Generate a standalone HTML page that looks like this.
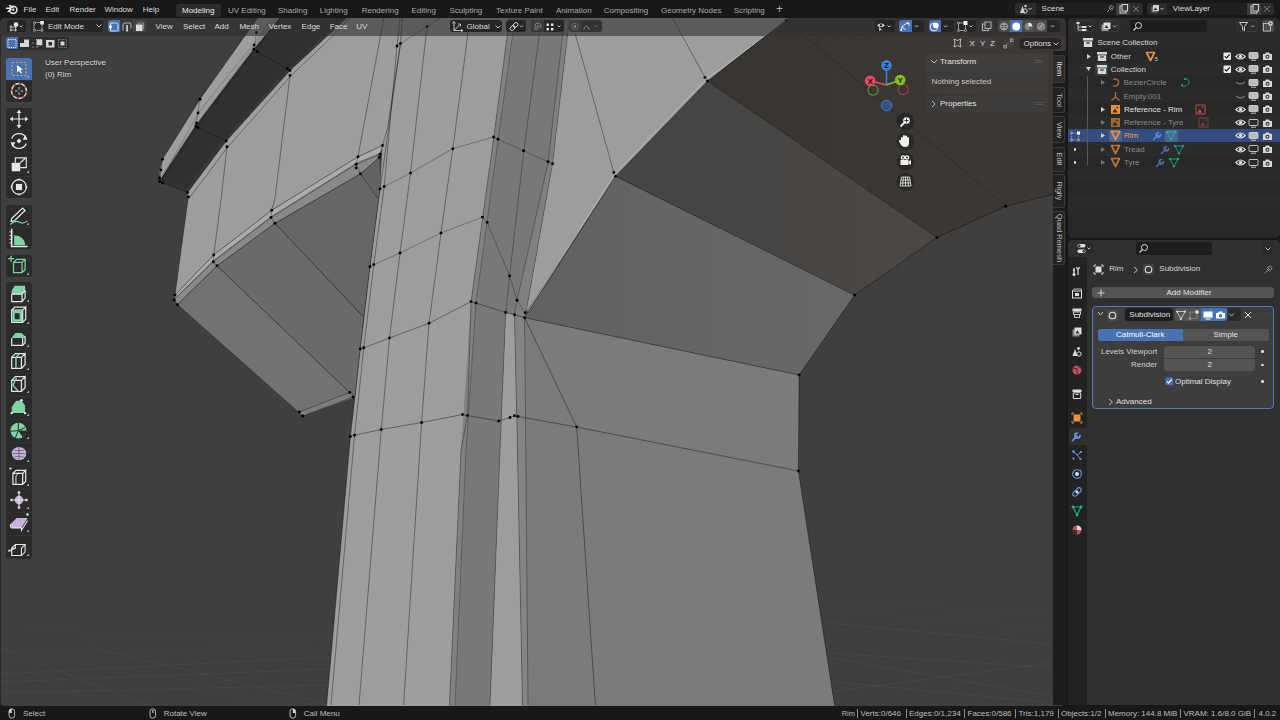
<!DOCTYPE html>
<html><head><meta charset="utf-8">
<style>
*{box-sizing:border-box;margin:0;padding:0}
html,body{width:1280px;height:720px;overflow:hidden;background:#181818;font-family:"Liberation Sans",sans-serif;color:#d6d6d6;font-size:9px;line-height:1}
.a{position:absolute}
.t{position:absolute;white-space:nowrap}
</style></head><body>
<div class="a" style="left:0;top:18px;width:1066px;height:688px;overflow:hidden;border-radius:5px;background:#3f3f3f">
<svg class="a" style="left:0;top:-18px" width="1066" height="706" viewBox="0 0 1066 706">
<defs><linearGradient id="gdark" gradientUnits="userSpaceOnUse" x1="720" y1="0" x2="1050" y2="0"><stop offset="0" stop-color="#373532"/><stop offset="1" stop-color="#3d3835"/></linearGradient><linearGradient id="gmid" gradientUnits="userSpaceOnUse" x1="620" y1="0" x2="930" y2="0"><stop offset="0" stop-color="#464543"/><stop offset="1" stop-color="#4a4745"/></linearGradient><linearGradient id="glow" gradientUnits="userSpaceOnUse" x1="530" y1="0" x2="850" y2="0"><stop offset="0" stop-color="#606161"/><stop offset="1" stop-color="#676868"/></linearGradient></defs>
<polyline points="0.0,647.6 148.7,706.0" fill="none" stroke="#6a6a6a" stroke-width="0.9" stroke-opacity="0.22"/>
<polyline points="93.0,647.6 324.0,703.0" fill="none" stroke="#6a6a6a" stroke-width="0.9" stroke-opacity="0.22"/>
<polyline points="0.0,674.0 329.0,657.0" fill="none" stroke="#6a6a6a" stroke-width="0.9" stroke-opacity="0.22"/>
<polyline points="0.0,682.0 329.0,669.0" fill="none" stroke="#6a6a6a" stroke-width="0.9" stroke-opacity="0.22"/>
<polyline points="0.0,693.0 329.0,685.0" fill="none" stroke="#6a6a6a" stroke-width="0.9" stroke-opacity="0.22"/>
<polyline points="0.0,662.0 329.0,650.0" fill="none" stroke="#6a6a6a" stroke-width="0.9" stroke-opacity="0.08"/>
<polyline points="0.0,655.0 329.0,644.0" fill="none" stroke="#6a6a6a" stroke-width="0.9" stroke-opacity="0.06"/>
<polyline points="20.0,630.0 329.0,640.0" fill="none" stroke="#6a6a6a" stroke-width="0.9" stroke-opacity="0.06"/>
<polyline points="180.0,690.0 329.0,705.0" fill="none" stroke="#6a6a6a" stroke-width="0.9" stroke-opacity="0.1"/>
<polyline points="823.6,622.6 1052.0,644.0" fill="none" stroke="#6a6a6a" stroke-width="0.9" stroke-opacity="0.22"/>
<polyline points="828.0,653.0 1052.0,667.5" fill="none" stroke="#6a6a6a" stroke-width="0.9" stroke-opacity="0.22"/>
<polyline points="835.0,691.0 1052.0,662.8" fill="none" stroke="#6a6a6a" stroke-width="0.9" stroke-opacity="0.22"/>
<polyline points="830.7,658.0 1052.0,696.0" fill="none" stroke="#6a6a6a" stroke-width="0.9" stroke-opacity="0.22"/>
<polyline points="835.0,681.7 1052.0,703.0" fill="none" stroke="#6a6a6a" stroke-width="0.9" stroke-opacity="0.22"/>
<polyline points="820.0,610.0 1052.0,628.0" fill="none" stroke="#6a6a6a" stroke-width="0.9" stroke-opacity="0.07"/>
<polyline points="818.0,600.0 1052.0,615.0" fill="none" stroke="#6a6a6a" stroke-width="0.9" stroke-opacity="0.05"/>
<polygon points="707.5,81.0 788.0,18.0 1066.0,18.0 1066.0,192.0 1052.6,194.4 1005.7,206.2 937.0,237.5" fill="url(#gdark)"/>
<polygon points="707.5,81.0 937.0,237.5 854.6,295.1 615.5,176.2" fill="url(#gmid)"/>
<polygon points="615.5,176.2 854.6,295.1 799.1,375.0 524.6,317.7 526.1,311.9" fill="url(#glow)"/>
<polygon points="569.5,18.0 788.0,18.0 707.5,81.0 615.5,176.2 526.1,311.9 552.5,163.8" fill="#9b9d9e"/>
<polygon points="524.6,317.7 799.1,375.0 798.4,471.0 834.6,706.0 522.5,706.0 517.5,450.0 514.5,314.8" fill="#7a7b7d"/>
<polygon points="159.5,181.5 159.5,170.0 162.5,159.2 200.0,99.2 245.0,35.7 257.5,18.0 279.7,18.0 253.9,49.3 195.8,126.0" fill="#9d9f9f"/>
<polygon points="159.5,181.5 195.8,126.0 253.9,49.3 279.7,18.0 346.6,18.0 290.0,70.5 226.2,141.0 187.5,192.5" fill="#323130"/>
<polygon points="184.5,191.5 223.5,140.0 287.5,69.5 343.5,18.0 346.6,18.0 290.0,70.5 226.2,141.0 187.5,192.5" fill="#393837"/>
<polygon points="159.5,181.5 195.8,126.0 253.9,49.3 279.7,18.0 283.0,18.0 257.0,50.0 199.0,127.0 163.0,182.8" fill="#2e2d2c"/>
<polygon points="187.5,192.5 226.2,141.0 290.0,70.5 346.6,18.0 515.0,18.0 500.0,137.0 478.0,301.0 473.0,415.0 466.0,450.0 455.0,706.0 326.6,706.0 350.4,436.5 360.3,349.0 370.0,266.7 380.0,189.0 382.5,145.5 358.0,156.8 271.7,210.3 213.7,255.0 175.0,295.0 188.3,197.0" fill="#9b9d9e"/>
<polygon points="175.0,295.0 213.7,255.0 271.7,210.3 358.0,156.8 382.5,145.5 380.0,153.0 356.2,163.0 271.0,216.5 213.3,260.5 174.4,299.0" fill="#aaacac"/>
<polygon points="174.4,299.0 213.3,260.5 271.0,216.5 356.2,163.0 380.0,153.0 379.2,157.5 360.5,173.8 275.0,223.3 217.0,265.8 177.5,304.7" fill="#87898a"/>
<polygon points="177.5,304.7 217.0,265.8 349.7,392.5 302.8,416.0" fill="#717274"/>
<polygon points="217.0,265.8 275.0,223.3 363.5,317.0 355.5,397.0 349.7,392.5" fill="#6a6b6d"/>
<polygon points="275.0,223.3 360.5,173.8 379.2,157.5 380.0,189.0 370.0,266.7 363.5,317.0" fill="#656668"/>
<polygon points="360.5,173.8 379.2,157.5 380.0,189.0 377.5,198.0" fill="#616264"/>
<polygon points="299.3,412.0 349.7,392.5 355.5,397.0 302.8,416.0" fill="#7c7d7f"/>
<polygon points="509.5,18.0 569.5,18.0 552.5,163.8 526.1,311.9 524.6,317.7 514.5,314.8 505.7,312.5 490.0,706.0 449.4,706.0 461.0,450.0 467.5,415.5 471.1,301.6 493.8,137.2" fill="#78797b"/>
<polygon points="509.5,18.0 515.0,18.0 498.2,139.2 476.0,303.1 466.0,450.0 455.0,706.0 449.4,706.0 461.0,450.0 471.1,301.6 493.8,137.2" fill="#7f8183"/>
<polygon points="564.5,18.0 569.5,18.0 552.5,163.8 526.1,311.9 524.6,317.7 514.5,314.8 517.0,300.2 548.2,162.2" fill="#7e8082"/>
<polygon points="505.7,312.5 514.5,314.8 517.5,450.0 522.5,706.0 490.0,706.0 500.0,450.0" fill="#9b9d9e"/>
<polygon points="514.5,314.8 524.6,317.7 528.0,706.0 522.5,706.0 517.5,450.0" fill="#838486"/>
<polyline points="159.5,181.5 160.0,170.0 162.5,159.2 200.0,99.2 245.0,35.7 257.5,18.0" fill="none" stroke="#000" stroke-width="0.7" stroke-opacity="0.5"/>
<polyline points="161.0,180.0 199.0,112.0 255.0,42.0 273.0,18.0" fill="none" stroke="#000" stroke-width="0.6" stroke-opacity="0.35"/>
<polyline points="160.0,178.0 197.0,123.0 254.5,46.0 276.0,18.0" fill="none" stroke="#000" stroke-width="0.6" stroke-opacity="0.35"/>
<polyline points="159.5,181.5 195.8,126.0 253.9,49.3 279.7,18.0" fill="none" stroke="#000" stroke-width="0.7" stroke-opacity="0.53"/>
<polyline points="162.5,159.2 159.5,181.5" fill="none" stroke="#000" stroke-width="0.7" stroke-opacity="0.42"/>
<polyline points="200.0,99.2 195.8,126.0" fill="none" stroke="#000" stroke-width="0.7" stroke-opacity="0.42"/>
<polyline points="256.5,32.4 253.9,49.3" fill="none" stroke="#000" stroke-width="0.7" stroke-opacity="0.42"/>
<polyline points="187.5,192.5 226.2,141.0 290.0,70.5 346.6,18.0" fill="none" stroke="#000" stroke-width="0.7" stroke-opacity="0.56"/>
<polyline points="189.0,195.0 227.5,144.0 291.0,73.5 348.5,20.5" fill="none" stroke="#c8caca" stroke-width="0.6" stroke-opacity="0.35"/>
<polyline points="190.0,197.0 228.0,146.8 291.0,75.5 333.0,35.7 350.0,18.0" fill="none" stroke="#000" stroke-width="0.6" stroke-opacity="0.55"/>
<polyline points="162.5,183.0 187.5,192.5" fill="none" stroke="#000" stroke-width="0.7" stroke-opacity="0.42"/>
<polyline points="198.0,127.5 226.2,141.0" fill="none" stroke="#000" stroke-width="0.7" stroke-opacity="0.42"/>
<polyline points="257.2,51.6 290.0,70.5" fill="none" stroke="#000" stroke-width="0.7" stroke-opacity="0.42"/>
<polyline points="188.3,197.0 175.0,295.0" fill="none" stroke="#000" stroke-width="0.7" stroke-opacity="0.47"/>
<polyline points="227.0,146.8 221.2,198.0 213.7,255.0" fill="none" stroke="#000" stroke-width="0.7" stroke-opacity="0.53"/>
<polyline points="290.0,75.5 275.0,198.0 271.7,210.3" fill="none" stroke="#000" stroke-width="0.7" stroke-opacity="0.53"/>
<polyline points="383.8,18.0 358.0,156.8" fill="none" stroke="#000" stroke-width="0.7" stroke-opacity="0.53"/>
<polyline points="175.0,295.0 213.7,255.0 271.7,210.3 358.0,156.8 382.5,145.5" fill="none" stroke="#000" stroke-width="0.7" stroke-opacity="0.52"/>
<polyline points="174.4,299.0 213.3,261.7 271.0,217.5 356.2,164.2 380.0,154.2" fill="none" stroke="#000" stroke-width="0.6" stroke-opacity="0.6"/>
<polyline points="177.5,304.7 217.0,265.8 275.0,223.3 360.5,173.8 379.2,157.5" fill="none" stroke="#000" stroke-width="0.7" stroke-opacity="0.53"/>
<polyline points="175.0,295.0 174.2,300.0 177.5,304.7" fill="none" stroke="#000" stroke-width="0.7" stroke-opacity="0.42"/>
<polyline points="213.7,255.0 213.3,261.7 217.0,265.8" fill="none" stroke="#000" stroke-width="0.7" stroke-opacity="0.42"/>
<polyline points="271.7,210.3 271.0,217.5 275.0,223.3" fill="none" stroke="#000" stroke-width="0.7" stroke-opacity="0.42"/>
<polyline points="358.0,156.8 356.2,164.2 360.5,173.8" fill="none" stroke="#000" stroke-width="0.7" stroke-opacity="0.42"/>
<polyline points="177.5,304.7 302.8,416.0 353.0,397.0" fill="none" stroke="#000" stroke-width="0.7" stroke-opacity="0.53"/>
<polyline points="217.0,265.8 349.7,392.5" fill="none" stroke="#000" stroke-width="0.7" stroke-opacity="0.53"/>
<polyline points="275.0,223.3 363.5,317.0" fill="none" stroke="#000" stroke-width="0.7" stroke-opacity="0.53"/>
<polyline points="360.5,173.8 377.5,198.0" fill="none" stroke="#000" stroke-width="0.7" stroke-opacity="0.5"/>
<polyline points="299.3,412.0 349.7,392.5" fill="none" stroke="#000" stroke-width="0.6" stroke-opacity="0.6"/>
<polyline points="402.5,18.0 400.5,43.5 387.5,128.0 382.5,145.5" fill="none" stroke="#000" stroke-width="0.7" stroke-opacity="0.53"/>
<polyline points="400.0,18.0 397.0,46.0 384.2,186.5 373.8,264.6 363.8,347.8 354.5,435.3 331.0,705.0" fill="none" stroke="#000" stroke-width="0.7" stroke-opacity="0.52"/>
<polyline points="400.5,43.5 380.0,189.0 370.0,266.7 360.3,349.0 350.4,436.5 326.7,705.0" fill="none" stroke="#000" stroke-width="0.7" stroke-opacity="0.55"/>
<polyline points="427.0,26.8 410.5,173.0 400.0,253.0 389.5,338.0 381.3,429.5 359.0,705.0" fill="none" stroke="#000" stroke-width="0.7" stroke-opacity="0.53"/>
<polyline points="470.0,18.0 452.8,148.7 441.0,233.0 429.0,323.3 421.6,422.5 403.6,705.0" fill="none" stroke="#000" stroke-width="0.7" stroke-opacity="0.53"/>
<polyline points="397.0,46.0 400.5,43.5 427.0,26.8 440.0,18.0" fill="none" stroke="#000" stroke-width="0.7" stroke-opacity="0.42"/>
<polyline points="380.0,189.0 384.2,186.5 410.5,173.0 452.8,148.7 493.6,137.0 498.0,139.3 523.6,150.7 548.0,161.8 552.6,163.8" fill="none" stroke="#000" stroke-width="0.7" stroke-opacity="0.42"/>
<polyline points="370.0,266.7 373.8,264.6 400.0,253.0 441.0,233.0 482.4,217.1 487.2,222.4 509.6,275.9 517.0,300.2 525.2,312.8" fill="none" stroke="#000" stroke-width="0.7" stroke-opacity="0.42"/>
<polyline points="360.3,349.0 363.8,347.8 389.5,338.0 429.0,323.3 471.1,301.6 476.0,303.1 505.7,312.5 514.5,314.8 524.6,317.7 576.7,427.0 595.4,705.0" fill="none" stroke="#000" stroke-width="0.7" stroke-opacity="0.55"/>
<polyline points="350.4,436.5 354.5,435.3 381.3,429.5 421.6,422.5 462.5,414.5 467.5,415.5 498.8,421.0 510.0,417.5 514.5,415.8 518.0,416.5 576.7,427.0 798.4,471.0" fill="none" stroke="#000" stroke-width="0.7" stroke-opacity="0.55"/>
<polyline points="524.6,317.7 528.0,705.0" fill="none" stroke="#000" stroke-width="0.7" stroke-opacity="0.44"/>
<polyline points="509.5,18.0 493.8,137.2 471.1,301.6 467.5,415.5 461.0,450.0 449.5,705.0" fill="none" stroke="#000" stroke-width="0.7" stroke-opacity="0.44"/>
<polyline points="515.0,18.0 498.2,139.2 476.0,303.1 466.0,450.0 455.0,705.0" fill="none" stroke="#000" stroke-width="0.7" stroke-opacity="0.35"/>
<polyline points="541.5,18.0 523.8,151.0 509.6,275.9 505.7,312.5 500.0,450.0 490.0,705.0" fill="none" stroke="#000" stroke-width="0.7" stroke-opacity="0.43"/>
<polyline points="564.5,18.0 548.2,162.2 517.0,300.2 514.5,314.8 517.5,450.0 522.5,705.0" fill="none" stroke="#000" stroke-width="0.7" stroke-opacity="0.43"/>
<polyline points="569.5,18.0 552.5,163.8 526.1,311.9" fill="none" stroke="#000" stroke-width="0.7" stroke-opacity="0.35"/>
<polyline points="528.0,311.0 615.0,173.5 706.5,79.0 788.0,19.0" fill="none" stroke="#c8caca" stroke-width="0.8" stroke-opacity="0.7"/>
<polyline points="524.6,317.7 615.5,176.2 707.5,81.0 786.2,20.5 790.0,18.0" fill="none" stroke="#000" stroke-width="0.7" stroke-opacity="0.53"/>
<polyline points="575.0,33.0 613.8,172.5" fill="none" stroke="#000" stroke-width="0.7" stroke-opacity="0.53"/>
<polyline points="672.5,18.0 705.0,77.5" fill="none" stroke="#000" stroke-width="0.7" stroke-opacity="0.53"/>
<polyline points="707.5,81.0 937.0,237.5" fill="none" stroke="#000" stroke-width="0.7" stroke-opacity="0.4"/>
<polyline points="615.5,176.2 854.6,295.1" fill="none" stroke="#000" stroke-width="0.7" stroke-opacity="0.52"/>
<polyline points="786.2,20.5 1005.7,206.2" fill="none" stroke="#000" stroke-width="0.7" stroke-opacity="0.3"/>
<polyline points="799.1,375.0 854.6,295.1 937.0,237.5 1005.7,206.2 1052.6,194.4" fill="none" stroke="#000" stroke-width="0.7" stroke-opacity="0.53"/>
<polyline points="524.6,317.7 799.1,375.0 798.4,471.0 834.5,705.0" fill="none" stroke="#000" stroke-width="0.7" stroke-opacity="0.53"/>
<circle cx="159.5" cy="181.5" r="1.45" fill="#000"/>
<circle cx="162.5" cy="183.0" r="1.45" fill="#000"/>
<circle cx="187.5" cy="192.5" r="1.45" fill="#000"/>
<circle cx="188.5" cy="197.0" r="1.45" fill="#000"/>
<circle cx="162.5" cy="159.2" r="1.45" fill="#000"/>
<circle cx="160.8" cy="170.0" r="1.45" fill="#000"/>
<circle cx="159.5" cy="178.0" r="1.45" fill="#000"/>
<circle cx="200.0" cy="99.2" r="1.45" fill="#000"/>
<circle cx="198.0" cy="113.0" r="1.45" fill="#000"/>
<circle cx="196.5" cy="123.0" r="1.45" fill="#000"/>
<circle cx="195.8" cy="126.0" r="1.45" fill="#000"/>
<circle cx="198.0" cy="127.5" r="1.45" fill="#000"/>
<circle cx="226.2" cy="141.0" r="1.45" fill="#000"/>
<circle cx="227.0" cy="146.8" r="1.45" fill="#000"/>
<circle cx="254.2" cy="45.0" r="1.45" fill="#000"/>
<circle cx="253.9" cy="49.3" r="1.45" fill="#000"/>
<circle cx="257.2" cy="51.6" r="1.45" fill="#000"/>
<circle cx="287.4" cy="68.7" r="1.45" fill="#000"/>
<circle cx="290.0" cy="70.5" r="1.45" fill="#000"/>
<circle cx="290.0" cy="75.5" r="1.45" fill="#000"/>
<circle cx="256.5" cy="32.4" r="1.45" fill="#000"/>
<circle cx="175.0" cy="295.0" r="1.45" fill="#000"/>
<circle cx="174.2" cy="300.0" r="1.45" fill="#000"/>
<circle cx="177.5" cy="304.7" r="1.45" fill="#000"/>
<circle cx="213.7" cy="255.0" r="1.45" fill="#000"/>
<circle cx="213.3" cy="261.7" r="1.45" fill="#000"/>
<circle cx="217.0" cy="265.8" r="1.45" fill="#000"/>
<circle cx="271.7" cy="210.3" r="1.45" fill="#000"/>
<circle cx="271.0" cy="217.5" r="1.45" fill="#000"/>
<circle cx="275.0" cy="223.3" r="1.45" fill="#000"/>
<circle cx="358.0" cy="156.8" r="1.45" fill="#000"/>
<circle cx="356.2" cy="164.2" r="1.45" fill="#000"/>
<circle cx="356.2" cy="168.0" r="1.45" fill="#000"/>
<circle cx="360.5" cy="173.8" r="1.45" fill="#000"/>
<circle cx="382.5" cy="145.5" r="1.45" fill="#000"/>
<circle cx="380.0" cy="154.2" r="1.45" fill="#000"/>
<circle cx="379.2" cy="157.5" r="1.45" fill="#000"/>
<circle cx="299.3" cy="412.0" r="1.45" fill="#000"/>
<circle cx="302.8" cy="416.0" r="1.45" fill="#000"/>
<circle cx="349.7" cy="392.5" r="1.45" fill="#000"/>
<circle cx="353.0" cy="397.0" r="1.45" fill="#000"/>
<circle cx="397.0" cy="46.0" r="1.45" fill="#000"/>
<circle cx="400.5" cy="43.5" r="1.45" fill="#000"/>
<circle cx="427.0" cy="26.8" r="1.45" fill="#000"/>
<circle cx="380.0" cy="189.0" r="1.45" fill="#000"/>
<circle cx="384.2" cy="186.5" r="1.45" fill="#000"/>
<circle cx="410.5" cy="173.0" r="1.45" fill="#000"/>
<circle cx="452.8" cy="148.7" r="1.45" fill="#000"/>
<circle cx="493.6" cy="137.0" r="1.45" fill="#000"/>
<circle cx="498.0" cy="139.3" r="1.45" fill="#000"/>
<circle cx="523.6" cy="150.7" r="1.45" fill="#000"/>
<circle cx="548.0" cy="161.8" r="1.45" fill="#000"/>
<circle cx="552.6" cy="163.8" r="1.45" fill="#000"/>
<circle cx="370.0" cy="266.7" r="1.45" fill="#000"/>
<circle cx="373.8" cy="264.6" r="1.45" fill="#000"/>
<circle cx="400.0" cy="253.0" r="1.45" fill="#000"/>
<circle cx="441.0" cy="233.0" r="1.45" fill="#000"/>
<circle cx="482.4" cy="217.1" r="1.45" fill="#000"/>
<circle cx="487.2" cy="222.4" r="1.45" fill="#000"/>
<circle cx="509.6" cy="275.9" r="1.45" fill="#000"/>
<circle cx="517.0" cy="300.2" r="1.45" fill="#000"/>
<circle cx="525.2" cy="312.8" r="1.45" fill="#000"/>
<circle cx="360.3" cy="349.0" r="1.45" fill="#000"/>
<circle cx="363.8" cy="347.8" r="1.45" fill="#000"/>
<circle cx="389.5" cy="338.0" r="1.45" fill="#000"/>
<circle cx="429.0" cy="323.3" r="1.45" fill="#000"/>
<circle cx="471.1" cy="301.6" r="1.45" fill="#000"/>
<circle cx="476.0" cy="303.1" r="1.45" fill="#000"/>
<circle cx="505.7" cy="312.5" r="1.45" fill="#000"/>
<circle cx="514.5" cy="314.8" r="1.45" fill="#000"/>
<circle cx="524.6" cy="317.7" r="1.45" fill="#000"/>
<circle cx="350.4" cy="436.5" r="1.45" fill="#000"/>
<circle cx="354.5" cy="435.3" r="1.45" fill="#000"/>
<circle cx="381.3" cy="429.5" r="1.45" fill="#000"/>
<circle cx="421.6" cy="422.5" r="1.45" fill="#000"/>
<circle cx="462.5" cy="414.5" r="1.45" fill="#000"/>
<circle cx="467.5" cy="415.5" r="1.45" fill="#000"/>
<circle cx="498.8" cy="421.0" r="1.45" fill="#000"/>
<circle cx="510.0" cy="417.5" r="1.45" fill="#000"/>
<circle cx="514.5" cy="415.8" r="1.45" fill="#000"/>
<circle cx="518.0" cy="416.5" r="1.45" fill="#000"/>
<circle cx="576.7" cy="427.0" r="1.45" fill="#000"/>
<circle cx="798.4" cy="471.0" r="1.45" fill="#000"/>
<circle cx="705.0" cy="77.5" r="1.45" fill="#000"/>
<circle cx="707.5" cy="81.0" r="1.45" fill="#000"/>
<circle cx="613.8" cy="172.5" r="1.45" fill="#000"/>
<circle cx="615.5" cy="176.2" r="1.45" fill="#000"/>
<circle cx="786.2" cy="20.5" r="1.45" fill="#000"/>
<circle cx="854.6" cy="295.1" r="1.45" fill="#000"/>
<circle cx="937.0" cy="237.5" r="1.45" fill="#000"/>
<circle cx="1005.7" cy="206.2" r="1.45" fill="#000"/>
<circle cx="799.1" cy="375.0" r="1.45" fill="#000"/>
</svg></div>
<!-- top bar -->
<div class="a" style="left:0;top:0;width:1280px;height:18px;background:#181818"></div>
<svg class="a" style="left:5px;top:3px" width="14" height="12" viewBox="0 0 14 12">
 <circle cx="8.3" cy="6.8" r="3.6" fill="none" stroke="#e0e0e0" stroke-width="1.6"/>
 <circle cx="8.3" cy="6.8" r="1.2" fill="#e0e0e0"/>
 <path d="M1.5 5.2 L5.8 5.2 M3.2 8.5 L6 6.2 M4.5 2.5 L8 4.5" stroke="#e0e0e0" stroke-width="1.5" stroke-linecap="round"/>
</svg>
<div class="t" style="left:23.5px;top:5.6px;font-size:8px;color:#dcdcdc">File</div>
<div class="t" style="left:45.5px;top:5.6px;font-size:8px;color:#dcdcdc">Edit</div>
<div class="t" style="left:69.5px;top:5.6px;font-size:8px;color:#dcdcdc">Render</div>
<div class="t" style="left:104.4px;top:5.6px;font-size:8px;color:#dcdcdc">Window</div>
<div class="t" style="left:142.7px;top:5.6px;font-size:8px;color:#dcdcdc">Help</div>
<div class="a" style="left:176px;top:3.9px;width:45px;height:12.8px;background:#2c2c2c;border-radius:3px"></div>
<div class="t" style="left:182px;top:7px;font-size:8px;color:#e8e8e8">Modeling</div>
<div class="t" style="left:228px;top:7px;font-size:8px;color:#a8a8a8">UV Editing</div>
<div class="t" style="left:278px;top:7px;font-size:8px;color:#a8a8a8">Shading</div>
<div class="t" style="left:319.7px;top:7px;font-size:8px;color:#a8a8a8">Lighting</div>
<div class="t" style="left:361.7px;top:7px;font-size:8px;color:#a8a8a8">Rendering</div>
<div class="t" style="left:411.5px;top:7px;font-size:8px;color:#a8a8a8">Editing</div>
<div class="t" style="left:449.4px;top:7px;font-size:8px;color:#a8a8a8">Sculpting</div>
<div class="t" style="left:496px;top:7px;font-size:8px;color:#a8a8a8">Texture Paint</div>
<div class="t" style="left:556px;top:7px;font-size:8px;color:#a8a8a8">Animation</div>
<div class="t" style="left:603.7px;top:7px;font-size:8px;color:#a8a8a8">Compositing</div>
<div class="t" style="left:661px;top:7px;font-size:8px;color:#a8a8a8">Geometry Nodes</div>
<div class="t" style="left:733.7px;top:7px;font-size:8px;color:#a8a8a8">Scripting</div>
<div class="t" style="left:776px;top:3px;font-size:12px;color:#b0b0b0">+</div>
<!-- scene -->
<div class="a" style="left:1015px;top:2.6px;width:127.6px;height:12.4px;background:#2c2c2c;border-radius:3px;overflow:hidden">
 <div class="a" style="left:21px;top:0;width:80px;height:12.4px;background:#1f1f1f"></div>
 <div class="a" style="left:101px;top:0;width:14px;height:12.4px;background:#3d3d3d"></div>
</div>
<svg class="a" style="left:1018px;top:4px" width="16" height="10" viewBox="0 0 16 10"><path d="M2 9 L4.5 2 L7 9 Z" fill="#cfcfcf"/><circle cx="7" cy="7" r="2.2" fill="none" stroke="#cfcfcf" stroke-width="1"/><circle cx="7.5" cy="2" r="1.2" fill="#cfcfcf"/><path d="M10.5 4 L12 5.5 L13.5 4" stroke="#cfcfcf" fill="none" stroke-width="0.9"/></svg>
<div class="t" style="left:1041.6px;top:5px;font-size:8px;color:#dcdcdc">Scene</div>
<svg class="a" style="left:1105px;top:4px" width="10" height="10" viewBox="0 0 10 10"><path d="M2 8 L4.5 5.5 M3.5 3.5 L6.5 6.5 M4.5 2.5 L7.5 5.5 L8.5 3 L7 1.5 Z" stroke="#9a9a9a" fill="none" stroke-width="0.9"/></svg>
<svg class="a" style="left:1118px;top:4px" width="11" height="10" viewBox="0 0 11 10"><rect x="2" y="2" width="6" height="7" fill="none" stroke="#cfcfcf" stroke-width="1"/><rect x="4" y="0.5" width="5.5" height="6.5" fill="#3d3d3d" stroke="#cfcfcf" stroke-width="1"/></svg>
<svg class="a" style="left:1132px;top:5px" width="8" height="8" viewBox="0 0 8 8"><path d="M1 1 L7 7 M7 1 L1 7" stroke="#777" stroke-width="1"/></svg>
<div class="a" style="left:1147px;top:2.6px;width:127px;height:12.4px;background:#2c2c2c;border-radius:3px;overflow:hidden">
 <div class="a" style="left:20px;top:0;width:80px;height:12.4px;background:#1f1f1f"></div>
 <div class="a" style="left:100px;top:0;width:14px;height:12.4px;background:#3d3d3d"></div>
</div>
<svg class="a" style="left:1150px;top:4px" width="16" height="10" viewBox="0 0 16 10"><rect x="1.5" y="2.5" width="6" height="6" fill="#777"/><rect x="3" y="1" width="6" height="6" fill="#cfcfcf"/><path d="M3.5 6 L5.5 3.5 L7.5 6Z" fill="#333"/><path d="M10.5 4 L12 5.5 L13.5 4" stroke="#cfcfcf" fill="none" stroke-width="0.9"/></svg>
<div class="t" style="left:1172.8px;top:5px;font-size:8px;color:#dcdcdc">ViewLayer</div>
<svg class="a" style="left:1249px;top:4px" width="11" height="10" viewBox="0 0 11 10"><rect x="2" y="2" width="6" height="7" fill="none" stroke="#cfcfcf" stroke-width="1"/><rect x="4" y="0.5" width="5.5" height="6.5" fill="#3d3d3d" stroke="#cfcfcf" stroke-width="1"/></svg>
<svg class="a" style="left:1263px;top:5px" width="8" height="8" viewBox="0 0 8 8"><path d="M1 1 L7 7 M7 1 L1 7" stroke="#777" stroke-width="1"/></svg>

<!-- viewport header -->
<div class="a" style="left:0;top:18px;width:1066px;height:17.7px;background:rgba(48,48,48,0.6);border-radius:5px 5px 0 0"></div>
<div class="a" style="left:7px;top:20.4px;width:19.3px;height:11.2px;background:#262626;border-radius:3px"></div>
<svg class="a" style="left:8px;top:20.5px" width="18" height="11" viewBox="0 0 18 11"><path d="M1.5 6 H9 M1.5 9 H9 M3 4 V10.5 M7.5 4 V10.5" stroke="#d0d0d0" stroke-width="0.9"/><circle cx="8" cy="3.5" r="2.3" fill="#e6e6e6"/><path d="M11.5 4.5 L13 6 L14.5 4.5" stroke="#cfcfcf" fill="none" stroke-width="0.9"/></svg>
<div class="a" style="left:31.3px;top:20.4px;width:71.7px;height:11.2px;background:#262626;border-radius:3px"></div>
<svg class="a" style="left:33px;top:20.5px" width="12" height="11" viewBox="0 0 12 11"><rect x="1" y="1.5" width="8" height="8" fill="none" stroke="#bbb" stroke-width="0.7"/><circle cx="1.3" cy="1.8" r="1.2" fill="#262626" stroke="#ccc" stroke-width="0.7"/><circle cx="1.3" cy="9.3" r="1.2" fill="#262626" stroke="#ccc" stroke-width="0.7"/><circle cx="9" cy="9.3" r="1.2" fill="#262626" stroke="#ccc" stroke-width="0.7"/><rect x="7.3" y="0" width="3.5" height="3.5" fill="#eee"/></svg>
<div class="t" style="left:48px;top:23.1px;font-size:8px;color:#dcdcdc">Edit Mode</div>
<svg class="a" style="left:96px;top:24px" width="6" height="4" viewBox="0 0 6 4"><path d="M0.5 0.5 L3 3 L5.5 0.5" stroke="#cfcfcf" fill="none" stroke-width="0.9"/></svg>
<div class="a" style="left:108px;top:20.4px;width:38px;height:11.2px;background:#3a3a3a;border-radius:3px;overflow:hidden"><div class="a" style="left:0;top:0;width:12px;height:11.2px;background:#4772b3"></div><div class="a" style="left:25px;top:0;width:13px;height:11.2px;background:#474747"></div></div>
<svg class="a" style="left:108px;top:20.5px" width="38" height="11" viewBox="0 0 38 11"><path d="M2.5 2 H8.5 A1.5 1.5 0 0 1 10 3.5 V8.5 A1.5 1.5 0 0 1 8.5 10 H2.5 Z" fill="none" stroke="#fff" stroke-width="0.8"/><rect x="1" y="4.5" width="2.8" height="2.8" fill="#fff"/>
<path d="M15 9.5 V4 A2 2 0 0 1 17 2 H22 A1 1 0 0 1 23 3 V7.5" fill="none" stroke="#ccc" stroke-width="0.8"/><rect x="18.3" y="4" width="1.6" height="6.5" fill="#ddd"/>
<rect x="28" y="3.5" width="6.5" height="6.5" fill="#ddd"/><path d="M30 3.5 V2 H35.5 V8 H34.5" stroke="#aaa" fill="none" stroke-width="0.7"/></svg>
<div class="t" style="left:155.5px;top:23.1px;font-size:8px;color:#dcdcdc">View</div>
<div class="t" style="left:183px;top:23.1px;font-size:8px;color:#dcdcdc">Select</div>
<div class="t" style="left:214.4px;top:23.1px;font-size:8px;color:#dcdcdc">Add</div>
<div class="t" style="left:239.4px;top:23.1px;font-size:8px;color:#dcdcdc">Mesh</div>
<div class="t" style="left:268.7px;top:23.1px;font-size:8px;color:#dcdcdc">Vertex</div>
<div class="t" style="left:301.6px;top:23.1px;font-size:8px;color:#dcdcdc">Edge</div>
<div class="t" style="left:329.7px;top:23.1px;font-size:8px;color:#dcdcdc">Face</div>
<div class="t" style="left:356.2px;top:23.1px;font-size:8px;color:#dcdcdc">UV</div>
<!-- center tools -->
<div class="a" style="left:449.8px;top:19.9px;width:52px;height:11.8px;background:#262626;border-radius:3px"></div>
<svg class="a" style="left:452px;top:20.5px" width="12" height="11" viewBox="0 0 12 11"><path d="M2 1 V9.5 H10.5 M2 9.5 L8 3.5" stroke="#d8d8d8" fill="none" stroke-width="0.9"/><path d="M0.5 2.5 L2 0.5 L3.5 2.5 M9 8 L11 9.5 L9 11 M6 3 H8.5 V5.5" stroke="#d8d8d8" fill="none" stroke-width="0.8"/></svg>
<div class="t" style="left:466.6px;top:23.1px;font-size:8px;color:#dcdcdc">Global</div>
<svg class="a" style="left:495px;top:24.5px" width="6" height="4" viewBox="0 0 6 4"><path d="M0.5 0.5 L3 3 L5.5 0.5" stroke="#cfcfcf" fill="none" stroke-width="0.9"/></svg>
<div class="a" style="left:506.4px;top:19.9px;width:20px;height:11.8px;background:#262626;border-radius:3px"></div>
<svg class="a" style="left:508px;top:20.5px" width="18" height="11" viewBox="0 0 18 11"><ellipse cx="4.5" cy="7" rx="2.8" ry="2" transform="rotate(-45 4.5 7)" fill="none" stroke="#d8d8d8" stroke-width="0.9"/><ellipse cx="7.5" cy="4" rx="2.8" ry="2" transform="rotate(-45 7.5 4)" fill="none" stroke="#d8d8d8" stroke-width="0.9"/><path d="M12 4.5 L13.5 6 L15 4.5" stroke="#cfcfcf" fill="none" stroke-width="0.9"/></svg>
<div class="a" style="left:531.4px;top:19.9px;width:33px;height:11.8px;background:#262626;border-radius:3px;overflow:hidden"><div class="a" style="left:0;top:0;width:12.4px;height:11.8px;background:#3b3b3b"></div></div>
<svg class="a" style="left:531.4px;top:20.5px" width="34" height="11" viewBox="0 0 34 11"><path d="M4 9 V5 A3 3 0 0 1 10 5 V7 M6 9 V5.5 A1 1 0 0 1 8 5.5 V7" stroke="#8a8a8a" fill="none" stroke-width="0.9"/><rect x="15.5" y="2.5" width="2.4" height="2.4" fill="#eee"/><rect x="20" y="2.5" width="2.4" height="2.4" fill="#eee"/><rect x="15.5" y="7" width="2.4" height="2.4" fill="#eee"/><rect x="20" y="7" width="2.4" height="2.4" fill="#eee"/><path d="M26.5 4.5 L28 6 L29.5 4.5" stroke="#cfcfcf" fill="none" stroke-width="0.9"/></svg>
<div class="a" style="left:569.4px;top:19.9px;width:33px;height:11.8px;background:#333;border-radius:3px;overflow:hidden"><div class="a" style="left:0;top:0;width:12px;height:11.8px;background:#3d3d3d"></div></div>
<svg class="a" style="left:569.4px;top:20.5px" width="34" height="11" viewBox="0 0 34 11"><circle cx="6" cy="5.5" r="3.3" fill="none" stroke="#6a6a6a" stroke-width="0.9"/><circle cx="6" cy="5.5" r="1.2" fill="#999"/><path d="M14.5 9 Q17.5 1 20.5 9" stroke="#8a8a8a" fill="none" stroke-width="0.9"/><path d="M25.5 4.5 L27 6 L28.5 4.5" stroke="#666" fill="none" stroke-width="0.9"/></svg>
<!-- right header -->
<div class="a" style="left:875px;top:20.2px;width:19.5px;height:11.5px;background:#262626;border-radius:3px"></div>
<svg class="a" style="left:876px;top:20.5px" width="18" height="11" viewBox="0 0 18 11"><path d="M1 4.5 Q5 0.5 9 4.5 Q5 8 1 4.5Z" fill="#e6e6e6"/><circle cx="5" cy="4.3" r="1.3" fill="#262626"/><path d="M3 6 L3.5 10.5 L5 8.5 L7 10 Z" fill="#e6e6e6"/><path d="M11.5 4.5 L13 6 L14.5 4.5" stroke="#cfcfcf" fill="none" stroke-width="0.9"/></svg>
<div class="a" style="left:899px;top:20.2px;width:25px;height:11.5px;background:#262626;border-radius:3px;overflow:hidden"><div class="a" style="left:0;top:0;width:12.7px;height:11.5px;background:#4772b3"></div></div>
<svg class="a" style="left:899px;top:20.5px" width="26" height="11" viewBox="0 0 26 11"><path d="M2 9.5 Q3 3 10 2" stroke="#fff" fill="none" stroke-width="0.9"/><path d="M2.5 5 L6.5 9 M7 2 L10 2 L10 5" stroke="#fff" fill="none" stroke-width="0.9"/><circle cx="2.3" cy="9" r="1.1" fill="#fff"/><path d="M16 4.5 L17.5 6 L19 4.5" stroke="#cfcfcf" fill="none" stroke-width="0.9"/></svg>
<div class="a" style="left:929px;top:20.2px;width:25px;height:11.5px;background:#262626;border-radius:3px;overflow:hidden"><div class="a" style="left:0;top:0;width:12px;height:11.5px;background:#4772b3"></div></div>
<svg class="a" style="left:929px;top:20.5px" width="26" height="11" viewBox="0 0 26 11"><circle cx="5" cy="6" r="3.8" fill="none" stroke="#fff" stroke-width="0.9"/><circle cx="6.8" cy="4.3" r="2.9" fill="#fff"/><path d="M15 4.5 L16.5 6 L18 4.5" stroke="#cfcfcf" fill="none" stroke-width="0.9"/></svg>
<div class="a" style="left:956px;top:20.2px;width:19.7px;height:11.5px;background:#262626;border-radius:3px"></div>
<svg class="a" style="left:957px;top:20.5px" width="18" height="11" viewBox="0 0 18 11"><rect x="1.5" y="2" width="7" height="7.5" fill="none" stroke="#ccc" stroke-width="0.7"/><circle cx="1.5" cy="9.5" r="1.1" fill="#262626" stroke="#ccc" stroke-width="0.7"/><circle cx="8.5" cy="9.5" r="1.1" fill="#262626" stroke="#ccc" stroke-width="0.7"/><circle cx="1.5" cy="2" r="1.1" fill="#262626" stroke="#ccc" stroke-width="0.7"/><rect x="6.5" y="0" width="4" height="4" fill="#eee"/><path d="M12.5 4.5 L14 6 L15.5 4.5" stroke="#cfcfcf" fill="none" stroke-width="0.9"/></svg>
<div class="a" style="left:980.6px;top:20.2px;width:12px;height:11.5px;background:#3a3a3a;border-radius:3px"></div>
<svg class="a" style="left:981px;top:20.5px" width="12" height="11" viewBox="0 0 12 11"><rect x="1.5" y="3" width="6" height="6.5" fill="none" stroke="#ccc" stroke-width="0.8"/><rect x="4" y="1" width="6" height="6.5" fill="#3a3a3a" stroke="#ccc" stroke-width="0.8"/></svg>
<div class="a" style="left:997.5px;top:20.2px;width:62.5px;height:11.5px;background:#262626;border-radius:3px;overflow:hidden"><div class="a" style="left:0;top:0;width:12px;height:11.5px;background:#4a4a4a"></div><div class="a" style="left:12px;top:0;width:12.5px;height:11.5px;background:#4772b3"></div><div class="a" style="left:24.5px;top:0;width:25px;height:11.5px;background:#4a4a4a"></div></div>
<svg class="a" style="left:997.5px;top:20.5px" width="63" height="11" viewBox="0 0 63 11"><circle cx="6" cy="5.5" r="3.6" fill="none" stroke="#ccc" stroke-width="0.7"/><path d="M2.4 5.5 H9.6 M6 1.9 V9.1 M3.5 3.5 H8.5 M3.5 7.5 H8.5" stroke="#ccc" stroke-width="0.6"/><circle cx="18.3" cy="5.5" r="3.9" fill="#fff"/><circle cx="30.5" cy="5.5" r="3.8" fill="#888"/><path d="M30.5 1.7 A3.8 3.8 0 0 1 30.5 9.3 Z" fill="#eee"/><path d="M30.5 5.5 H34.3 A3.8 3.8 0 0 1 30.5 9.3 Z" fill="#555"/><circle cx="43" cy="5.5" r="3.8" fill="#777" stroke="#bbb" stroke-width="0.5"/><path d="M41 7.5 L45 3.5" stroke="#ddd" stroke-width="0.8"/><path d="M53 4.5 L54.5 6 L56 4.5" stroke="#cfcfcf" fill="none" stroke-width="0.9"/></svg>
<!-- row 2 -->
<div class="a" style="left:5.6px;top:36.6px;width:63.2px;height:13.2px;background:#2d2d2d;border-radius:3px"></div>
<div class="a" style="left:6.2px;top:37px;width:11.8px;height:12.4px;background:#4772b3;border-radius:3px 0 0 3px"></div>
<svg class="a" style="left:6px;top:37px" width="63" height="13" viewBox="0 0 63 13"><rect x="2" y="2.5" width="8" height="8" fill="none" stroke="#fff" stroke-width="0.9" stroke-dasharray="1.2 1"/>
<path d="M14 10 V6 H18 V2.5 H23 V10 Z" fill="#d4d4d4"/><path d="M26.5 10 H28.5 M26.5 6 H28 M30 2.5 H36 V8 H32 V10 H30" stroke="#d4d4d4" fill="none" stroke-width="0.9" stroke-dasharray="1.2 0.9"/><rect x="30.5" y="2.5" width="5.5" height="5.5" fill="#d4d4d4"/>
<rect x="40" y="3" width="8.5" height="7.5" fill="#d4d4d4"/><rect x="42.5" y="5" width="3.5" height="3.5" fill="#2d2d2d"/>
<rect x="52.5" y="2.5" width="8" height="8" fill="none" stroke="#aaa" stroke-width="0.8" stroke-dasharray="1 1.2"/><rect x="54.5" y="4.5" width="4" height="4" fill="#d4d4d4"/></svg>
<!-- sidebar header row -->
<svg class="a" style="left:951px;top:37px" width="13" height="12" viewBox="0 0 13 12"><path d="M3 2 Q6.5 5 10 2 Q8 6 10 10 Q6.5 7 3 10 Q5 6 3 2Z" fill="none" stroke="#ccc" stroke-width="0.9"/></svg>
<div class="a" style="left:964.7px;top:37.5px;width:32.3px;height:11.5px;background:#3d3d3d;border-radius:3px"></div>
<div class="t" style="left:969.5px;top:40.4px;font-size:8px;color:#dcdcdc">X</div>
<div class="t" style="left:980px;top:40.4px;font-size:8px;color:#dcdcdc">Y</div>
<div class="t" style="left:990px;top:40.4px;font-size:8px;color:#dcdcdc">Z</div>
<div class="a" style="left:1002.5px;top:37.5px;width:11.5px;height:11.5px;background:#3d3d3d;border-radius:3px"></div>
<svg class="a" style="left:1003px;top:38px" width="11" height="11" viewBox="0 0 11 11"><path d="M2 8.5 L8.5 2" stroke="#aaa" stroke-width="0.8" stroke-dasharray="1 1"/><rect x="1" y="7.5" width="2.5" height="2.5" fill="none" stroke="#ccc" stroke-width="0.6"/><rect x="7.5" y="1" width="2.5" height="2.5" fill="none" stroke="#ccc" stroke-width="0.6"/></svg>
<div class="a" style="left:1019.5px;top:37.5px;width:41.5px;height:11.5px;background:#262626;border-radius:3px"></div>
<div class="t" style="left:1023.5px;top:40.4px;font-size:8px;color:#dcdcdc">Options</div>
<svg class="a" style="left:1053px;top:41.5px" width="6" height="4" viewBox="0 0 6 4"><path d="M0.5 0.5 L3 3 L5.5 0.5" stroke="#cfcfcf" fill="none" stroke-width="0.9"/></svg>

<div class="a" style="left:0;top:34px;width:1.2px;height:671px;background:#2a2a2a"></div>
<div class="a" style="left:6.25px;top:58.3px;width:25.7px;height:44.2px;background:#2b2b2b;border-radius:3px"></div>
<div class="a" style="left:6.25px;top:58.3px;width:25.7px;height:21.9px;background:#4772b3;border-radius:3px 3px 0 0"></div>
<svg class="a" style="left:7px;top:58.2px" width="24" height="22" viewBox="0 0 24 22"><g transform="translate(12 11) scale(1.0) translate(-12 -11)"><rect x="5" y="4.5" width="14" height="13" fill="none" stroke="#e8a33a" stroke-width="1.2" stroke-dasharray="2.2 1.6"/><path d="M10 7 L10 14.5 L12 12.8 L14 15.5 L15 15 L13.3 12 L16 11.8 Z" fill="#fff"/></g><path d="M22 20 L22 17.5 L19.5 20Z" fill="#aaa"/></svg>
<div class="a" style="left:6.25px;top:80.2px;width:25.7px;height:1px;background:#333"></div>
<svg class="a" style="left:7px;top:80.3px" width="24" height="22" viewBox="0 0 24 22"><g transform="translate(12 11) scale(1.0) translate(-12 -11)"><circle cx="12" cy="11" r="7.5" fill="none" stroke="#e0e0e0" stroke-width="1.4"/><circle cx="12" cy="11" r="7.5" fill="none" stroke="#b83232" stroke-width="1.4" stroke-dasharray="2.2 3.69"/><path d="M12 7 V9.5 M12 12.5 V15 M8 11 H10.5 M13.5 11 H16" stroke="#ddd" stroke-width="0.9"/></g></svg>
<div class="a" style="left:6.25px;top:108.3px;width:25.7px;height:90.2px;background:#2b2b2b;border-radius:3px"></div>
<svg class="a" style="left:7px;top:108.2px" width="24" height="22" viewBox="0 0 24 22"><g transform="translate(12 11) scale(1.22) translate(-12 -11)"><path d="M12 4 V18 M5 11 H19" stroke="#e6e6e6" stroke-width="1"/><path d="M12 3.5 L10 6 H14Z M12 18.5 L10 16 H14Z M4.5 11 L7 9 V13Z M19.5 11 L17 9 V13Z" fill="#e6e6e6"/></g></svg>
<div class="a" style="left:6.25px;top:130.2px;width:25.7px;height:1px;background:#333"></div>
<svg class="a" style="left:7px;top:130.1px" width="24" height="22" viewBox="0 0 24 22"><g transform="translate(12 11) scale(1.22) translate(-12 -11)"><path d="M6 9 A6.5 6.5 0 0 1 18 9 M18 13 A6.5 6.5 0 0 1 6 13" fill="none" stroke="#e6e6e6" stroke-width="1.1"/><path d="M17 6 L19 10 L15 10Z M7 16 L5 12 L9 12Z" fill="#e6e6e6"/><path d="M12 9 L14 11 L12 13 L10 11Z" fill="#e6e6e6"/></g></svg>
<div class="a" style="left:6.25px;top:152.0px;width:25.7px;height:1px;background:#333"></div>
<svg class="a" style="left:7px;top:153.0px" width="24" height="22" viewBox="0 0 24 22"><g transform="translate(12 11) scale(1.22) translate(-12 -11)"><rect x="6" y="10" width="7" height="7" fill="#e6e6e6"/><path d="M9 10 V6 H18 V14 H13" fill="none" stroke="#e6e6e6" stroke-width="0.9"/><path d="M13 10 L17 6.5" stroke="#e6e6e6" stroke-width="1"/></g><path d="M22 20 L22 17.5 L19.5 20Z" fill="#aaa"/></svg>
<div class="a" style="left:6.25px;top:176.0px;width:25.7px;height:1px;background:#333"></div>
<svg class="a" style="left:7px;top:176.2px" width="24" height="22" viewBox="0 0 24 22"><g transform="translate(12 11) scale(1.22) translate(-12 -11)"><circle cx="12" cy="11" r="6" fill="none" stroke="#e6e6e6" stroke-width="1"/><rect x="9.5" y="8.5" width="5" height="5" fill="#e6e6e6"/><path d="M12 3.8 L10.5 5.5 H13.5Z M12 18.2 L10.5 16.5 H13.5Z M4.8 11 L6.5 9.5 V12.5Z M19.2 11 L17.5 9.5 V12.5Z" fill="#e6e6e6"/></g></svg>
<div class="a" style="left:6.25px;top:204.5px;width:25.7px;height:44.5px;background:#2b2b2b;border-radius:3px"></div>
<svg class="a" style="left:7px;top:204.5px" width="24" height="22" viewBox="0 0 24 22"><g transform="translate(12 11) scale(1.22) translate(-12 -11)"><path d="M6 13 L15 4.5 L17 6.5 L8 15 L5.5 15.5Z" fill="none" stroke="#e6e6e6" stroke-width="1"/><path d="M5 18 Q9 14 12 16 Q15 18 19 15" fill="none" stroke="#7fd3a4" stroke-width="1"/></g><path d="M22 20 L22 17.5 L19.5 20Z" fill="#aaa"/></svg>
<div class="a" style="left:6.25px;top:226.5px;width:25.7px;height:1px;background:#333"></div>
<svg class="a" style="left:7px;top:226.8px" width="24" height="22" viewBox="0 0 24 22"><g transform="translate(12 11) scale(1.22) translate(-12 -11)"><path d="M6 3.5 V18 H19" fill="none" stroke="#e6e6e6" stroke-width="1.3"/><path d="M8 17 V9 A8 8 0 0 1 17 17Z" fill="#7fd3a4"/><path d="M4 6 H6 M4 9 H6 M4 12 H6 M4 15 H6" stroke="#e6e6e6" stroke-width="0.7"/></g></svg>
<div class="a" style="left:6.25px;top:254.7px;width:25.7px;height:22.3px;background:#2b2b2b;border-radius:3px"></div>
<svg class="a" style="left:7px;top:254.8px" width="24" height="22" viewBox="0 0 24 22"><g transform="translate(12 11) scale(1.22) translate(-12 -11)"><path d="M7.5 8 L10 5.5 H17 V14 L14.5 16.5 H7.5Z M7.5 8 H14.5 V16.5 M14.5 8 L17 5.5" fill="none" stroke="#7fd3a4" stroke-width="1"/><path d="M5.5 2.5 V7.5 M3 5 H8" stroke="#7fd3a4" stroke-width="1.1"/></g><path d="M22 20 L22 17.5 L19.5 20Z" fill="#aaa"/></svg>
<div class="a" style="left:6.25px;top:281.7px;width:25.7px;height:277.0px;background:#2b2b2b;border-radius:3px"></div>
<svg class="a" style="left:7px;top:281.5px" width="24" height="22" viewBox="0 0 24 22"><g transform="translate(12 11) scale(1.22) translate(-12 -11)"><path d="M6 9 L8.5 5 H17 V9 L14.5 12 H6Z" fill="#7fd3a4"/><path d="M6 12 V18 H14.5 V12 M14.5 18 L17 15 V9" fill="none" stroke="#e6e6e6" stroke-width="1"/><path d="M6 12 H14.5 L17 9" fill="none" stroke="#e6e6e6" stroke-width="1"/></g><path d="M22 20 L22 17.5 L19.5 20Z" fill="#aaa"/></svg>
<div class="a" style="left:6.25px;top:303.3px;width:25.7px;height:1px;background:#333"></div>
<svg class="a" style="left:7px;top:303.9px" width="24" height="22" viewBox="0 0 24 22"><g transform="translate(12 11) scale(1.22) translate(-12 -11)"><path d="M6 7 H15 V17 H6Z M15 7 L17.5 4.5 V14.5 L15 17 M6 7 L8.5 4.5 H17.5" fill="none" stroke="#e6e6e6" stroke-width="1"/><rect x="6.5" y="7.5" width="8" height="9" fill="#7fd3a4"/><rect x="8.5" y="9.5" width="4" height="5" fill="#2b2b2b"/></g><path d="M22 20 L22 17.5 L19.5 20Z" fill="#aaa"/></svg>
<div class="a" style="left:6.25px;top:326.4px;width:25.7px;height:1px;background:#333"></div>
<svg class="a" style="left:7px;top:326.7px" width="24" height="22" viewBox="0 0 24 22"><g transform="translate(12 11) scale(1.22) translate(-12 -11)"><path d="M6 11 L9 7 H14 L17 9.5 V11 H6Z" fill="#7fd3a4"/><path d="M6 11 V17 H15 V11 M15 17 L17 15 V9.5" fill="none" stroke="#e6e6e6" stroke-width="1"/></g><path d="M22 20 L22 17.5 L19.5 20Z" fill="#aaa"/></svg>
<div class="a" style="left:6.25px;top:349.0px;width:25.7px;height:1px;background:#333"></div>
<svg class="a" style="left:7px;top:349.9px" width="24" height="22" viewBox="0 0 24 22"><g transform="translate(12 11) scale(1.22) translate(-12 -11)"><path d="M6 8 H14 V17 H6Z M14 8 L17 5 V14 L14 17 M6 8 L9 5 H17" fill="none" stroke="#e6e6e6" stroke-width="1"/><path d="M9.5 17 V8 L12.5 5" fill="none" stroke="#7fd3a4" stroke-width="1.2"/></g><path d="M22 20 L22 17.5 L19.5 20Z" fill="#aaa"/></svg>
<div class="a" style="left:6.25px;top:372.8px;width:25.7px;height:1px;background:#333"></div>
<svg class="a" style="left:7px;top:373.1px" width="24" height="22" viewBox="0 0 24 22"><g transform="translate(12 11) scale(1.22) translate(-12 -11)"><path d="M6 8 H14 V17 H6Z M14 8 L17 5 V14 L14 17 M6 8 L9 5 H17" fill="none" stroke="#e6e6e6" stroke-width="1"/><path d="M10 6 L7 12 L11 16.5" fill="none" stroke="#7fd3a4" stroke-width="1.1"/></g><path d="M22 20 L22 17.5 L19.5 20Z" fill="#aaa"/></svg>
<div class="a" style="left:6.25px;top:395.5px;width:25.7px;height:1px;background:#333"></div>
<svg class="a" style="left:7px;top:396.0px" width="24" height="22" viewBox="0 0 24 22"><g transform="translate(12 11) scale(1.22) translate(-12 -11)"><path d="M6 16 V11 L9.5 6 L14 5.5 L17 10 L17 16Z" fill="#7fd3a4"/><circle cx="6" cy="16" r="1" fill="#e6e6e6"/><circle cx="17" cy="16" r="1" fill="#e6e6e6"/><circle cx="14" cy="5.5" r="1" fill="#e6e6e6"/></g><path d="M22 20 L22 17.5 L19.5 20Z" fill="#aaa"/></svg>
<div class="a" style="left:6.25px;top:418.5px;width:25.7px;height:1px;background:#333"></div>
<svg class="a" style="left:7px;top:419.0px" width="24" height="22" viewBox="0 0 24 22"><g transform="translate(12 11) scale(1.22) translate(-12 -11)"><circle cx="11.5" cy="11.5" r="6.5" fill="#7fd3a4"/><path d="M11.5 11.5 L11.5 5 M11.5 11.5 L17 9 M11.5 11.5 L16 16 M11.5 11.5 L9 17.5 M11.5 11.5 L5 12" stroke="#2b2b2b" stroke-width="0.8"/><path d="M11.5 11.5 L18 11.5 A6.5 6.5 0 0 1 15 17Z" fill="#2b2b2b"/></g><path d="M22 20 L22 17.5 L19.5 20Z" fill="#aaa"/></svg>
<div class="a" style="left:6.25px;top:441.5px;width:25.7px;height:1px;background:#333"></div>
<svg class="a" style="left:7px;top:442.2px" width="24" height="22" viewBox="0 0 24 22"><g transform="translate(12 11) scale(1.22) translate(-12 -11)"><ellipse cx="12" cy="11.5" rx="6" ry="5.5" fill="#c9b3e0"/><path d="M6 11.5 H18 M12 6 V17 M7.5 8.5 Q12 10 16.5 8.5 M7.5 14.5 Q12 13 16.5 14.5" stroke="#555" fill="none" stroke-width="0.6"/></g><path d="M22 20 L22 17.5 L19.5 20Z" fill="#aaa"/></svg>
<div class="a" style="left:6.25px;top:465.0px;width:25.7px;height:1px;background:#333"></div>
<svg class="a" style="left:7px;top:465.8px" width="24" height="22" viewBox="0 0 24 22"><g transform="translate(12 11) scale(1.22) translate(-12 -11)"><path d="M7 8 H15 V17 H7Z M15 8 L17.5 5.5 V14.5 L15 17 M7 8 L9.5 5.5 H17.5" fill="none" stroke="#e6e6e6" stroke-width="1"/><path d="M9.5 17 V10 L12 7.5" fill="none" stroke="#e6e6e6" stroke-width="0.8"/><circle cx="5" cy="4" r="1" fill="#c9b3e0"/></g><path d="M22 20 L22 17.5 L19.5 20Z" fill="#aaa"/></svg>
<div class="a" style="left:6.25px;top:488.5px;width:25.7px;height:1px;background:#333"></div>
<svg class="a" style="left:7px;top:489.0px" width="24" height="22" viewBox="0 0 24 22"><g transform="translate(12 11) scale(1.22) translate(-12 -11)"><circle cx="12" cy="11" r="3.5" fill="#c9b3e0"/><path d="M12 4 V18 M5 11 H19" stroke="#e6e6e6" stroke-width="0.9"/><path d="M12 3.5 L10.5 5.5 H13.5Z M12 18.5 L10.5 16.5 H13.5Z M4.5 11 L6.5 9.5 V12.5Z M19.5 11 L17.5 9.5 V12.5Z" fill="#e6e6e6"/></g><path d="M22 20 L22 17.5 L19.5 20Z" fill="#aaa"/></svg>
<div class="a" style="left:6.25px;top:511.5px;width:25.7px;height:1px;background:#333"></div>
<svg class="a" style="left:7px;top:512.2px" width="24" height="22" viewBox="0 0 24 22"><g transform="translate(12 11) scale(1.22) translate(-12 -11)"><path d="M5 12 L10 7 H19 L14 15 H6Z" fill="#c9b3e0"/><path d="M5 12 V14 L6 15 H14 L14 17 L19 9" fill="none" stroke="#e6e6e6" stroke-width="0.9"/><circle cx="19" cy="4" r="1" fill="#e6e6e6"/></g><path d="M22 20 L22 17.5 L19.5 20Z" fill="#aaa"/></svg>
<div class="a" style="left:6.25px;top:535.0px;width:25.7px;height:1px;background:#333"></div>
<svg class="a" style="left:7px;top:535.9px" width="24" height="22" viewBox="0 0 24 22"><g transform="translate(12 11) scale(1.22) translate(-12 -11)"><path d="M6 12 L9 9 H17 V15 L14 18 H6Z M9 9 V12 H6 M14 18 V12 L17 9" fill="none" stroke="#e6e6e6" stroke-width="0.9"/><path d="M4 14 L9 12" stroke="#e6e6e6" stroke-width="0.9"/><circle cx="4" cy="14" r="1" fill="#c9b3e0"/></g><path d="M22 20 L22 17.5 L19.5 20Z" fill="#aaa"/></svg>
<div class="t" style="left:45px;top:58.5px;font-size:8px;color:#e6e6e6;text-shadow:0 0 1.5px #000">User Perspective</div>
<div class="t" style="left:45px;top:70.5px;font-size:8px;color:#e6e6e6;text-shadow:0 0 1px #000">(0) Rim</div>
<!-- gizmo -->
<svg class="a" style="left:860px;top:55px" width="60" height="140" viewBox="860 55 60 140">
 <line x1="886.5" y1="85" x2="886.5" y2="65.4" stroke="#3d7fd6" stroke-width="1.6"/>
 <line x1="886.5" y1="85" x2="870.2" y2="80.8" stroke="#e64a5e" stroke-width="1.6"/>
 <line x1="886.5" y1="85" x2="900.2" y2="80" stroke="#80c020" stroke-width="1.6"/>
 <circle cx="873" cy="90.2" r="5" fill="none" stroke="#6a9a2a" stroke-width="1.1"/>
 <circle cx="903.3" cy="89.5" r="5" fill="none" stroke="#a8384a" stroke-width="1.1"/>
 <circle cx="886.5" cy="105.6" r="5.3" fill="#34557f" stroke="#4077c0" stroke-width="1"/>
 <circle cx="886.5" cy="65.4" r="5.3" fill="#3d7fd6"/>
 <circle cx="870.2" cy="80.8" r="5.3" fill="#e64a5e"/>
 <circle cx="900.2" cy="80" r="5.3" fill="#80c020"/>
 <text x="886.5" y="68.3" font-family="Liberation Sans" font-size="7.5" font-weight="bold" fill="#101010" text-anchor="middle">Z</text>
 <text x="870.2" y="83.7" font-family="Liberation Sans" font-size="7.5" font-weight="bold" fill="#101010" text-anchor="middle">X</text>
 <text x="900.2" y="82.9" font-family="Liberation Sans" font-size="7.5" font-weight="bold" fill="#101010" text-anchor="middle">Y</text>
 <g fill="#262626" fill-opacity="0.85"><circle cx="905.4" cy="121.6" r="9"/><circle cx="905.4" cy="141.5" r="9"/><circle cx="905.4" cy="161.5" r="9"/><circle cx="905.4" cy="181.8" r="9"/></g>
 <circle cx="906.5" cy="120.5" r="3.3" fill="#eee"/><path d="M904.5 122.5 L900.5 126.5" stroke="#eee" stroke-width="1.8"/><path d="M906.5 118.5 V122.5 M904.5 120.5 H908.5" stroke="#262626" stroke-width="0.9"/>
 <path d="M901 142 V138 A1 1 0 0 1 903 138 V140 V136 A1 1 0 0 1 905 136 V140 V136.5 A1 1 0 0 1 907 136.5 V140 V138 A1 1 0 0 1 909 138 V143 Q909 147 905 147 Q902 147 900.5 144 L899 141.5 A1 1 0 0 1 901 140.5Z" fill="#eee"/>
 <circle cx="903" cy="157.5" r="2.3" fill="#eee"/><circle cx="907" cy="157.5" r="2.3" fill="#eee"/><rect x="900.5" y="160" width="8" height="5" fill="#eee"/><path d="M908.5 161.5 L911 160 V165 L908.5 163.5Z" fill="#eee"/><circle cx="903" cy="157.5" r="0.9" fill="#262626"/><circle cx="907" cy="157.5" r="0.9" fill="#262626"/>
 <path d="M901.5 177 H909.5 L911 186 H900Z M903.5 177 L902.5 186 M905.5 177 V186 M907.5 177 L908.5 186 M901 180 H910 M900.5 183 H910.5" fill="none" stroke="#eee" stroke-width="0.8"/>
</svg>
<!-- sidebar panels -->
<div class="a" style="left:925.5px;top:53.6px;width:122.3px;height:40px;background:rgba(61,61,61,0.78);border-radius:4px"></div>
<div class="a" style="left:925.5px;top:53.6px;width:122.3px;height:18px;background:rgba(66,66,66,0.5);border-radius:4px 4px 0 0"></div>
<svg class="a" style="left:930px;top:59px" width="8" height="6" viewBox="0 0 8 6"><path d="M1 1 L4 4 L7 1" stroke="#ccc" fill="none" stroke-width="0.9"/></svg>
<div class="t" style="left:940px;top:58px;font-size:8px;color:#e6e6e6">Transform</div>
<div class="a" style="left:1035px;top:60px;width:8px;height:0.8px;background:#555"></div><div class="a" style="left:1035px;top:62px;width:8px;height:0.8px;background:#555"></div>
<div class="t" style="left:931.5px;top:77.8px;font-size:8px;color:#c8c8c8">Nothing selected</div>
<div class="a" style="left:925.5px;top:96px;width:122.3px;height:15.5px;background:rgba(61,61,61,0.78);border-radius:4px"></div>
<svg class="a" style="left:931px;top:100px" width="6" height="8" viewBox="0 0 6 8"><path d="M1 1 L4 4 L1 7" stroke="#ccc" fill="none" stroke-width="0.9"/></svg>
<div class="t" style="left:940px;top:99.7px;font-size:8px;color:#e6e6e6">Properties</div>
<div class="a" style="left:1035px;top:102px;width:8px;height:0.8px;background:#555"></div><div class="a" style="left:1035px;top:104px;width:8px;height:0.8px;background:#555"></div>
<!-- tabs -->
<div class="a" style="left:1052.5px;top:51px;width:13.5px;height:654px;background:#1d1d1d"></div>
<div class="a" style="left:1053px;top:54.8px;width:11.5px;height:28.2px;background:#2c2c2c;border:0.8px solid #3a3a3a;border-left:none;border-radius:0 3px 3px 0"></div>
<div class="t" style="left:1058.8px;top:68.9px;font-size:7.5px;color:#e0e0e0;transform:translate(-50%,-50%) rotate(90deg)">Item</div>
<div class="a" style="left:1053px;top:86.7px;width:11.5px;height:25.9px;background:#232323;border:0.8px solid #3a3a3a;border-left:none;border-radius:0 3px 3px 0"></div>
<div class="t" style="left:1058.8px;top:99.7px;font-size:7.5px;color:#bdbdbd;transform:translate(-50%,-50%) rotate(90deg)">Tool</div>
<div class="a" style="left:1053px;top:116.0px;width:11.5px;height:27.0px;background:#232323;border:0.8px solid #3a3a3a;border-left:none;border-radius:0 3px 3px 0"></div>
<div class="t" style="left:1058.8px;top:129.5px;font-size:7.5px;color:#bdbdbd;transform:translate(-50%,-50%) rotate(90deg)">View</div>
<div class="a" style="left:1053px;top:147.0px;width:11.5px;height:24.7px;background:#232323;border:0.8px solid #3a3a3a;border-left:none;border-radius:0 3px 3px 0"></div>
<div class="t" style="left:1058.8px;top:159.3px;font-size:7.5px;color:#bdbdbd;transform:translate(-50%,-50%) rotate(90deg)">Edit</div>
<div class="a" style="left:1053px;top:174.0px;width:11.5px;height:34.0px;background:#232323;border:0.8px solid #3a3a3a;border-left:none;border-radius:0 3px 3px 0"></div>
<div class="t" style="left:1058.8px;top:191.0px;font-size:7.5px;color:#bdbdbd;transform:translate(-50%,-50%) rotate(90deg)">Rigify</div>
<div class="a" style="left:1053px;top:211.0px;width:11.5px;height:54.0px;background:#232323;border:0.8px solid #3a3a3a;border-left:none;border-radius:0 3px 3px 0"></div>
<div class="t" style="left:1058.8px;top:238.0px;font-size:7.5px;color:#bdbdbd;transform:translate(-50%,-50%) rotate(90deg)">Quad Remesh</div>
<div class="a" style="left:1068px;top:18px;width:212px;height:219.5px;background:#282828;border-radius:5px"></div>
<div class="a" style="left:1068px;top:36.0px;width:212px;height:13.3px;background:#2b2b2b"></div><div class="a" style="left:1068px;top:62.6px;width:212px;height:13.3px;background:#2b2b2b"></div><div class="a" style="left:1068px;top:89.2px;width:212px;height:13.3px;background:#2b2b2b"></div><div class="a" style="left:1068px;top:115.8px;width:212px;height:13.3px;background:#2b2b2b"></div><div class="a" style="left:1068px;top:142.4px;width:212px;height:13.3px;background:#2b2b2b"></div><div class="a" style="left:1068px;top:169.0px;width:212px;height:13.3px;background:#2b2b2b"></div><div class="a" style="left:1068px;top:195.6px;width:212px;height:13.3px;background:#2b2b2b"></div>
<div class="a" style="left:1068px;top:18px;width:212px;height:16.5px;background:#2b2b2b;border-radius:5px 5px 0 0"></div>
<div class="a" style="left:1073.5px;top:19.7px;width:20.9px;height:12.7px;background:#2b2b2b;border:0.7px solid #3a3a3a;border-radius:3px"></div>
<div class="a" style="left:1098.6px;top:19.7px;width:20.6px;height:12.7px;background:#2b2b2b;border:0.7px solid #3a3a3a;border-radius:3px"></div>
<div class="a" style="left:1237.0px;top:19.7px;width:21.0px;height:12.7px;background:#2b2b2b;border:0.7px solid #3a3a3a;border-radius:3px"></div>
<div class="a" style="left:1130.4px;top:19.7px;width:77px;height:12.7px;background:#1d1d1d;border-radius:3px"></div>
<div class="a" style="left:1261.6px;top:19.7px;width:12.6px;height:12.7px;background:#4a4a4a;border-radius:3px"></div>
<svg class="a" style="left:1075px;top:20.5px" width="20" height="11" viewBox="0 0 20 11"><rect x="1.5" y="1" width="3" height="2" fill="#ddd"/><path d="M3 3 V9 H6 M3 6 H6" stroke="#ddd" stroke-width="0.8" fill="none"/><rect x="6.5" y="5" width="5" height="2" fill="#ddd"/><rect x="6.5" y="8" width="5" height="2" fill="#ddd"/><path d="M13.5 4.5 L15 6 L16.5 4.5" stroke="#cfcfcf" fill="none" stroke-width="0.9"/></svg>
<svg class="a" style="left:1100px;top:20.5px" width="20" height="11" viewBox="0 0 20 11"><rect x="1.5" y="3.5" width="7" height="6.5" fill="#999"/><rect x="3.5" y="1.5" width="7" height="6.5" fill="#ddd"/><path d="M4.5 7 L6.5 4 L8.5 7Z" fill="#333"/><path d="M13 4.5 L14.5 6 L16 4.5" stroke="#cfcfcf" fill="none" stroke-width="0.9"/></svg>
<svg class="a" style="left:1132px;top:20.5px" width="12" height="11" viewBox="0 0 12 11"><circle cx="6.5" cy="4.5" r="3" fill="none" stroke="#ddd" stroke-width="1"/><path d="M4.3 6.7 L1.5 9.5" stroke="#ddd" stroke-width="1.1"/></svg>
<svg class="a" style="left:1238px;top:20.5px" width="20" height="11" viewBox="0 0 20 11"><path d="M1.5 1.5 H9.5 L6.5 5.5 V9.5 L4.5 8.5 V5.5Z" fill="none" stroke="#ddd" stroke-width="0.9"/><path d="M13 4.5 L14.5 6 L16 4.5" stroke="#cfcfcf" fill="none" stroke-width="0.9"/></svg>
<svg class="a" style="left:1262px;top:20.5px" width="12" height="11" viewBox="0 0 12 11"><rect x="1.5" y="2.5" width="7" height="7.5" fill="none" stroke="#ccc" stroke-width="0.8"/><circle cx="8.5" cy="2.5" r="2.3" fill="#ddd"/><path d="M8.5 1.3 V3.7 M7.3 2.5 H9.7" stroke="#4a4a4a" stroke-width="0.7"/></svg>
<div class="a" style="left:1068px;top:129.2px;width:212px;height:13.2px;background:#334d80"></div>
<div class="a" style="left:1086.8px;top:76px;width:0.8px;height:89px;background:#5a5a5a"></div>
<svg class="a" style="left:1082.0px;top:37.2px" width="12" height="11" viewBox="0 0 12 11"><rect x="1" y="1" width="10" height="2.5" fill="#d8d8d8"/><path d="M1.8 4.3 H10.2 V10 H1.8Z" fill="#d8d8d8"/><rect x="4.3" y="5.4" width="3.4" height="1.2" fill="#282828"/></svg>
<div class="t" style="left:1097.4px;top:39.1px;font-size:8px;color:#d6d6d6;">Scene Collection</div>
<svg class="a" style="left:1085.5px;top:52.5px" width="6" height="7" viewBox="0 0 6 7"><path d="M1 1 L5 3.5 L1 6Z" fill="#cfcfcf"/></svg>
<svg class="a" style="left:1095.5px;top:50.6px" width="12" height="11" viewBox="0 0 12 11"><rect x="1" y="1" width="10" height="2.5" fill="#d8d8d8"/><path d="M1.8 4.3 H10.2 V10 H1.8Z" fill="#d8d8d8"/><rect x="4.3" y="5.4" width="3.4" height="1.2" fill="#282828"/></svg>
<div class="t" style="left:1110.8px;top:52.5px;font-size:8px;color:#d6d6d6;">Other</div>
<svg class="a" style="left:1145.0px;top:50.5px;opacity:1" width="11" height="11" viewBox="0 0 11 11"><path d="M1.5 1.5 H9.5 L5.5 9.5Z" fill="none" stroke="#e8913a" stroke-width="1.7" stroke-linejoin="round"/></svg>
<div class="t" style="left:1154.6px;top:55.5px;font-size:6px;color:#d6d6d6;">5</div>
<svg class="a" style="left:1085.0px;top:66.2px" width="7" height="6" viewBox="0 0 7 6"><path d="M1 1 L6 1 L3.5 5Z" fill="#cfcfcf"/></svg>
<div class="a" style="left:1094.5px;top:62.5px;width:13px;height:13px;background:#3c3c3c;border-radius:3px"></div>
<svg class="a" style="left:1095.5px;top:63.8px" width="12" height="11" viewBox="0 0 12 11"><rect x="1" y="1" width="10" height="2.5" fill="#d8d8d8"/><path d="M1.8 4.3 H10.2 V10 H1.8Z" fill="#d8d8d8"/><rect x="4.3" y="5.4" width="3.4" height="1.2" fill="#282828"/></svg>
<div class="t" style="left:1110.8px;top:65.7px;font-size:8px;color:#d6d6d6;">Collection</div>
<svg class="a" style="left:1099.5px;top:79.0px" width="6" height="7" viewBox="0 0 6 7"><path d="M1 1 L5 3.5 L1 6Z" fill="#777"/></svg>
<svg class="a" style="left:1110px;top:77px" width="11" height="11" viewBox="0 0 11 11"><path d="M3 2 Q8.5 1.5 8.5 5.5 Q8.5 9.5 3 9" fill="none" stroke="#e8913a" stroke-width="1.6" stroke-opacity="0.65"/></svg>
<div class="t" style="left:1123.5px;top:79.0px;font-size:8px;color:#8a8a8a;">BezierCircle</div>
<svg class="a" style="left:1180px;top:77px" width="12" height="11" viewBox="0 0 12 11"><path d="M2 8 Q2 10 4 9.5 Q10 8 9 4 Q8 1 5 2" fill="none" stroke="#1fb38a" stroke-width="0.9" stroke-opacity="0.8"/><circle cx="2" cy="8" r="1" fill="#1fb38a"/><circle cx="5" cy="2" r="1" fill="#1fb38a"/></svg>
<svg class="a" style="left:1110px;top:90.5px" width="11" height="11" viewBox="0 0 11 11"><path d="M5.5 1 V6 L1.5 9.5 M5.5 6 L9.5 9.5" fill="none" stroke="#e8913a" stroke-width="1.3" stroke-opacity="0.65"/></svg>
<div class="t" style="left:1123.5px;top:92.5px;font-size:8px;color:#8a8a8a;">Empty.001</div>
<svg class="a" style="left:1099.5px;top:105.7px" width="6" height="7" viewBox="0 0 6 7"><path d="M1 1 L5 3.5 L1 6Z" fill="#cfcfcf"/></svg>
<svg class="a" style="left:1110.0px;top:103.7px;opacity:1" width="11" height="11" viewBox="0 0 11 11"><rect x="1" y="1" width="9" height="9" fill="#e8913a"/><path d="M2.5 8.5 L5 4.5 L7.5 8.5Z" fill="#282828"/><circle cx="7.3" cy="3.3" r="0.9" fill="#282828"/></svg>
<div class="t" style="left:1124.0px;top:105.7px;font-size:8px;color:#e0e0e0;">Reference - Rim</div>
<svg class="a" style="left:1195.0px;top:103.7px;opacity:1" width="11" height="11" viewBox="0 0 11 11"><rect x="1" y="1" width="9" height="9" fill="none" stroke="#c8505a" stroke-width="0.9"/><path d="M2.5 8.8 L4.8 5 L7 8.8Z" fill="#c8505a"/><circle cx="7.5" cy="3.3" r="0.8" fill="#c8505a"/></svg>
<svg class="a" style="left:1099.5px;top:119.1px" width="6" height="7" viewBox="0 0 6 7"><path d="M1 1 L5 3.5 L1 6Z" fill="#777"/></svg>
<svg class="a" style="left:1110.0px;top:117.1px;opacity:0.6" width="11" height="11" viewBox="0 0 11 11"><rect x="1" y="1" width="9" height="9" fill="#e8913a"/><path d="M2.5 8.5 L5 4.5 L7.5 8.5Z" fill="#282828"/><circle cx="7.3" cy="3.3" r="0.9" fill="#282828"/></svg>
<div class="t" style="left:1124.0px;top:119.1px;font-size:8px;color:#8a8a8a;">Reference - Tyre</div>
<svg class="a" style="left:1198.0px;top:117.1px;opacity:0.6" width="11" height="11" viewBox="0 0 11 11"><rect x="1" y="1" width="9" height="9" fill="none" stroke="#c8505a" stroke-width="0.9"/><path d="M2.5 8.8 L4.8 5 L7 8.8Z" fill="#c8505a"/><circle cx="7.5" cy="3.3" r="0.8" fill="#c8505a"/></svg>
<svg class="a" style="left:1069.5px;top:130.5px" width="11" height="11" viewBox="0 0 11 11"><rect x="1.5" y="2" width="7" height="7" fill="none" stroke="#ddd" stroke-width="0.6" stroke-dasharray="1 1"/><circle cx="1.5" cy="9" r="1" fill="#334d80" stroke="#ddd" stroke-width="0.6"/><circle cx="8.5" cy="9" r="1" fill="#334d80" stroke="#ddd" stroke-width="0.6"/><circle cx="1.5" cy="2" r="1" fill="#334d80" stroke="#ddd" stroke-width="0.6"/><rect x="7" y="0.5" width="3" height="3" fill="#fff"/></svg>
<svg class="a" style="left:1099.5px;top:132.3px" width="6" height="7" viewBox="0 0 6 7"><path d="M1 1 L5 3.5 L1 6Z" fill="#cfcfcf"/></svg>
<div class="a" style="left:1108.5px;top:129.8px;width:13px;height:12px;background:#4d6699;border-radius:3px"></div>
<svg class="a" style="left:1109.5px;top:130.3px;opacity:1" width="11" height="11" viewBox="0 0 11 11"><path d="M1.5 1.5 H9.5 L5.5 9.5Z" fill="none" stroke="#e8913a" stroke-width="1.7" stroke-linejoin="round"/></svg>
<div class="t" style="left:1124.0px;top:132.3px;font-size:8px;color:#f0a848;">Rim</div>
<svg class="a" style="left:1151.7px;top:130.3px;opacity:1" width="11" height="11" viewBox="0 0 11 11"><path d="M1.5 9.5 L6 5 M6.5 2.5 A2.2 2.2 0 1 0 8.5 4.5" fill="none" stroke="#5f8de0" stroke-width="1.5" stroke-linecap="round"/></svg>
<div class="a" style="left:1164.5px;top:129.8px;width:13px;height:12px;background:#4d6699;border-radius:3px"></div>
<svg class="a" style="left:1165.0px;top:130.3px;opacity:1" width="12" height="11" viewBox="0 0 12 11"><path d="M2 2 H10 L6 9.5Z" fill="none" stroke="#1fb38a" stroke-width="1"/><circle cx="2" cy="2" r="1.3" fill="#1fb38a"/><circle cx="10" cy="2" r="1.3" fill="#1fb38a"/><circle cx="6" cy="9.3" r="1.3" fill="#1fb38a"/></svg>
<svg class="a" style="left:1099.5px;top:145.7px" width="6" height="7" viewBox="0 0 6 7"><path d="M1 1 L5 3.5 L1 6Z" fill="#777"/></svg>
<svg class="a" style="left:1109.5px;top:143.7px;opacity:0.75" width="11" height="11" viewBox="0 0 11 11"><path d="M1.5 1.5 H9.5 L5.5 9.5Z" fill="none" stroke="#e8913a" stroke-width="1.7" stroke-linejoin="round"/></svg>
<div class="t" style="left:1124.0px;top:145.7px;font-size:8px;color:#8a8a8a;">Tread</div>
<svg class="a" style="left:1159.6px;top:143.7px;opacity:0.7" width="11" height="11" viewBox="0 0 11 11"><path d="M1.5 9.5 L6 5 M6.5 2.5 A2.2 2.2 0 1 0 8.5 4.5" fill="none" stroke="#5f8de0" stroke-width="1.5" stroke-linecap="round"/></svg>
<svg class="a" style="left:1172.5px;top:143.7px;opacity:0.8" width="12" height="11" viewBox="0 0 12 11"><path d="M2 2 H10 L6 9.5Z" fill="none" stroke="#1fb38a" stroke-width="1"/><circle cx="2" cy="2" r="1.3" fill="#1fb38a"/><circle cx="10" cy="2" r="1.3" fill="#1fb38a"/><circle cx="6" cy="9.3" r="1.3" fill="#1fb38a"/></svg>
<svg class="a" style="left:1099.5px;top:159.0px" width="6" height="7" viewBox="0 0 6 7"><path d="M1 1 L5 3.5 L1 6Z" fill="#777"/></svg>
<svg class="a" style="left:1109.5px;top:157.0px;opacity:0.75" width="11" height="11" viewBox="0 0 11 11"><path d="M1.5 1.5 H9.5 L5.5 9.5Z" fill="none" stroke="#e8913a" stroke-width="1.7" stroke-linejoin="round"/></svg>
<div class="t" style="left:1124.0px;top:159.0px;font-size:8px;color:#8a8a8a;">Tyre</div>
<svg class="a" style="left:1154.8px;top:157.0px;opacity:0.7" width="11" height="11" viewBox="0 0 11 11"><path d="M1.5 9.5 L6 5 M6.5 2.5 A2.2 2.2 0 1 0 8.5 4.5" fill="none" stroke="#5f8de0" stroke-width="1.5" stroke-linecap="round"/></svg>
<svg class="a" style="left:1168.0px;top:157.0px;opacity:0.8" width="12" height="11" viewBox="0 0 12 11"><path d="M2 2 H10 L6 9.5Z" fill="none" stroke="#1fb38a" stroke-width="1"/><circle cx="2" cy="2" r="1.3" fill="#1fb38a"/><circle cx="10" cy="2" r="1.3" fill="#1fb38a"/><circle cx="6" cy="9.3" r="1.3" fill="#1fb38a"/></svg>
<div class="a" style="left:1073.5px;top:148px;width:2.6px;height:2.6px;border-radius:50%;background:#ddd"></div>
<div class="a" style="left:1073.5px;top:161.3px;width:2.6px;height:2.6px;border-radius:50%;background:#ddd"></div>
<svg class="a" style="left:1222.5px;top:51.5px" width="9" height="9" viewBox="0 0 9 9"><rect x="0.5" y="0.5" width="7.5" height="7.5" rx="1" fill="#e8e8e8"/><path d="M1.8 4.3 L3.5 6 L6.8 2.3" stroke="#1a1a1a" fill="none" stroke-width="1.2"/></svg>
<svg class="a" style="left:1234.5px;top:51.5px" width="11" height="9" viewBox="0 0 11 9"><path d="M0.8 4.5 Q5.5 -0.5 10.2 4.5 Q5.5 9.5 0.8 4.5Z" fill="none" stroke="#e0e0e0" stroke-width="1.1"/><circle cx="5.5" cy="4.5" r="1.7" fill="#e0e0e0"/></svg>
<svg class="a" style="left:1247.5px;top:51.0px" width="11" height="10" viewBox="0 0 11 10"><rect x="1" y="1.5" width="9" height="6" rx="0.8" fill="#bdbdbd" stroke="#d0d0d0" stroke-width="0.9"/><path d="M3 9.2 H8" stroke="#d0d0d0" stroke-width="0.9"/></svg>
<svg class="a" style="left:1261.5px;top:51.0px" width="11" height="10" viewBox="0 0 11 10"><path d="M1 3 H3 L4 1.5 H7 L8 3 H10 V9 H1Z" fill="#d8d8d8"/><circle cx="5.5" cy="5.8" r="2" fill="#282828"/><circle cx="5.5" cy="5.8" r="1" fill="#d8d8d8"/></svg>
<svg class="a" style="left:1222.5px;top:64.7px" width="9" height="9" viewBox="0 0 9 9"><rect x="0.5" y="0.5" width="7.5" height="7.5" rx="1" fill="#e8e8e8"/><path d="M1.8 4.3 L3.5 6 L6.8 2.3" stroke="#1a1a1a" fill="none" stroke-width="1.2"/></svg>
<svg class="a" style="left:1234.5px;top:64.7px" width="11" height="9" viewBox="0 0 11 9"><path d="M0.8 4.5 Q5.5 -0.5 10.2 4.5 Q5.5 9.5 0.8 4.5Z" fill="none" stroke="#e0e0e0" stroke-width="1.1"/><circle cx="5.5" cy="4.5" r="1.7" fill="#e0e0e0"/></svg>
<svg class="a" style="left:1247.5px;top:64.2px" width="11" height="10" viewBox="0 0 11 10"><rect x="1" y="1.5" width="9" height="6" rx="0.8" fill="#bdbdbd" stroke="#d0d0d0" stroke-width="0.9"/><path d="M3 9.2 H8" stroke="#d0d0d0" stroke-width="0.9"/></svg>
<svg class="a" style="left:1261.5px;top:64.2px" width="11" height="10" viewBox="0 0 11 10"><path d="M1 3 H3 L4 1.5 H7 L8 3 H10 V9 H1Z" fill="#d8d8d8"/><circle cx="5.5" cy="5.8" r="2" fill="#282828"/><circle cx="5.5" cy="5.8" r="1" fill="#d8d8d8"/></svg>
<svg class="a" style="left:1234.5px;top:78.0px" width="11" height="9" viewBox="0 0 11 9"><path d="M1 4 Q5.5 8 10 4" fill="none" stroke="#9a9a9a" stroke-width="1"/></svg>
<svg class="a" style="left:1247.5px;top:77.5px" width="11" height="10" viewBox="0 0 11 10"><rect x="1" y="1.5" width="9" height="6" rx="0.8" fill="#bdbdbd" stroke="#d0d0d0" stroke-width="0.9"/><path d="M3 9.2 H8" stroke="#d0d0d0" stroke-width="0.9"/></svg>
<svg class="a" style="left:1261.5px;top:77.5px" width="11" height="10" viewBox="0 0 11 10"><path d="M1 3 H3 L4 1.5 H7 L8 3 H10 V9 H1Z" fill="#d8d8d8"/><circle cx="5.5" cy="5.8" r="2" fill="#282828"/><circle cx="5.5" cy="5.8" r="1" fill="#d8d8d8"/></svg>
<svg class="a" style="left:1234.5px;top:91.5px" width="11" height="9" viewBox="0 0 11 9"><path d="M1 4 Q5.5 8 10 4" fill="none" stroke="#9a9a9a" stroke-width="1"/></svg>
<svg class="a" style="left:1247.5px;top:91.0px" width="11" height="10" viewBox="0 0 11 10"><rect x="1" y="1.5" width="9" height="6" rx="0.8" fill="#bdbdbd" stroke="#d0d0d0" stroke-width="0.9"/><path d="M3 9.2 H8" stroke="#d0d0d0" stroke-width="0.9"/></svg>
<svg class="a" style="left:1261.5px;top:91.0px" width="11" height="10" viewBox="0 0 11 10"><path d="M1 3 H3 L4 1.5 H7 L8 3 H10 V9 H1Z" fill="#d8d8d8"/><circle cx="5.5" cy="5.8" r="2" fill="#282828"/><circle cx="5.5" cy="5.8" r="1" fill="#d8d8d8"/></svg>
<svg class="a" style="left:1234.5px;top:104.7px" width="11" height="9" viewBox="0 0 11 9"><path d="M0.8 4.5 Q5.5 -0.5 10.2 4.5 Q5.5 9.5 0.8 4.5Z" fill="none" stroke="#e0e0e0" stroke-width="1.1"/><circle cx="5.5" cy="4.5" r="1.7" fill="#e0e0e0"/></svg>
<svg class="a" style="left:1247.5px;top:104.2px" width="11" height="10" viewBox="0 0 11 10"><rect x="1" y="1.5" width="9" height="6" rx="0.8" fill="#bdbdbd" stroke="#d0d0d0" stroke-width="0.9"/><path d="M3 9.2 H8" stroke="#d0d0d0" stroke-width="0.9"/></svg>
<svg class="a" style="left:1261.5px;top:104.2px" width="11" height="10" viewBox="0 0 11 10"><path d="M1 3 H3 L4 1.5 H7 L8 3 H10 V9 H1Z" fill="#d8d8d8"/><circle cx="5.5" cy="5.8" r="2" fill="#282828"/><circle cx="5.5" cy="5.8" r="1" fill="#d8d8d8"/></svg>
<svg class="a" style="left:1234.5px;top:118.1px" width="11" height="9" viewBox="0 0 11 9"><path d="M0.8 4.5 Q5.5 -0.5 10.2 4.5 Q5.5 9.5 0.8 4.5Z" fill="none" stroke="#e0e0e0" stroke-width="1.1"/><circle cx="5.5" cy="4.5" r="1.7" fill="#e0e0e0"/></svg>
<svg class="a" style="left:1247.5px;top:117.6px" width="11" height="10" viewBox="0 0 11 10"><rect x="1" y="1.5" width="9" height="6" rx="0.8" fill="none" stroke="#d0d0d0" stroke-width="0.9"/><path d="M3 9.2 H8" stroke="#d0d0d0" stroke-width="0.9"/></svg>
<svg class="a" style="left:1261.5px;top:117.6px" width="11" height="10" viewBox="0 0 11 10"><path d="M1 3 H3 L4 1.5 H7 L8 3 H10 V9 H1Z" fill="#d8d8d8"/><circle cx="5.5" cy="5.8" r="2" fill="#282828"/><circle cx="5.5" cy="5.8" r="1" fill="#d8d8d8"/></svg>
<svg class="a" style="left:1234.5px;top:131.3px" width="11" height="9" viewBox="0 0 11 9"><path d="M0.8 4.5 Q5.5 -0.5 10.2 4.5 Q5.5 9.5 0.8 4.5Z" fill="none" stroke="#e0e0e0" stroke-width="1.1"/><circle cx="5.5" cy="4.5" r="1.7" fill="#e0e0e0"/></svg>
<svg class="a" style="left:1247.5px;top:130.8px" width="11" height="10" viewBox="0 0 11 10"><rect x="1" y="1.5" width="9" height="6" rx="0.8" fill="#bdbdbd" stroke="#d0d0d0" stroke-width="0.9"/><path d="M3 9.2 H8" stroke="#d0d0d0" stroke-width="0.9"/></svg>
<svg class="a" style="left:1261.5px;top:130.8px" width="11" height="10" viewBox="0 0 11 10"><path d="M1 3 H3 L4 1.5 H7 L8 3 H10 V9 H1Z" fill="#d8d8d8"/><circle cx="5.5" cy="5.8" r="2" fill="#282828"/><circle cx="5.5" cy="5.8" r="1" fill="#d8d8d8"/></svg>
<svg class="a" style="left:1234.5px;top:144.7px" width="11" height="9" viewBox="0 0 11 9"><path d="M0.8 4.5 Q5.5 -0.5 10.2 4.5 Q5.5 9.5 0.8 4.5Z" fill="none" stroke="#e0e0e0" stroke-width="1.1"/><circle cx="5.5" cy="4.5" r="1.7" fill="#e0e0e0"/></svg>
<svg class="a" style="left:1247.5px;top:144.2px" width="11" height="10" viewBox="0 0 11 10"><rect x="1" y="1.5" width="9" height="6" rx="0.8" fill="none" stroke="#d0d0d0" stroke-width="0.9"/><path d="M3 9.2 H8" stroke="#d0d0d0" stroke-width="0.9"/></svg>
<svg class="a" style="left:1261.5px;top:144.2px" width="11" height="10" viewBox="0 0 11 10"><path d="M1 3 H3 L4 1.5 H7 L8 3 H10 V9 H1Z" fill="#d8d8d8"/><circle cx="5.5" cy="5.8" r="2" fill="#282828"/><circle cx="5.5" cy="5.8" r="1" fill="#d8d8d8"/></svg>
<svg class="a" style="left:1234.5px;top:158.0px" width="11" height="9" viewBox="0 0 11 9"><path d="M0.8 4.5 Q5.5 -0.5 10.2 4.5 Q5.5 9.5 0.8 4.5Z" fill="none" stroke="#e0e0e0" stroke-width="1.1"/><circle cx="5.5" cy="4.5" r="1.7" fill="#e0e0e0"/></svg>
<svg class="a" style="left:1247.5px;top:157.5px" width="11" height="10" viewBox="0 0 11 10"><rect x="1" y="1.5" width="9" height="6" rx="0.8" fill="none" stroke="#d0d0d0" stroke-width="0.9"/><path d="M3 9.2 H8" stroke="#d0d0d0" stroke-width="0.9"/></svg>
<svg class="a" style="left:1261.5px;top:157.5px" width="11" height="10" viewBox="0 0 11 10"><path d="M1 3 H3 L4 1.5 H7 L8 3 H10 V9 H1Z" fill="#d8d8d8"/><circle cx="5.5" cy="5.8" r="2" fill="#282828"/><circle cx="5.5" cy="5.8" r="1" fill="#d8d8d8"/></svg>
<div class="a" style="left:1068px;top:239.7px;width:212px;height:465.3px;background:#303030;border-radius:5px 5px 0 0;overflow:hidden">
<div class="a" style="left:0;top:0;width:212px;height:17px;background:#303030"></div>
<div class="a" style="left:0;top:17px;width:18.5px;height:450px;background:#232323"></div>
</div>
<div class="a" style="left:1075px;top:241.7px;width:18.3px;height:13.3px;background:#2b2b2b;border-radius:3px"></div>
<svg class="a" style="left:1076px;top:242px" width="18" height="13" viewBox="0 0 18 13"><rect x="1.5" y="2" width="8" height="3.5" rx="1.7" fill="#ddd"/><rect x="1.5" y="7.5" width="8" height="3.5" rx="1.7" fill="#ddd"/><circle cx="3.3" cy="3.7" r="1.2" fill="#2b2b2b"/><circle cx="7.7" cy="9.3" r="1.2" fill="#2b2b2b"/><path d="M11.5 5.5 L13 7 L14.5 5.5" stroke="#cfcfcf" fill="none" stroke-width="0.9"/></svg>
<div class="a" style="left:1136px;top:241.7px;width:75.7px;height:13.3px;background:#1d1d1d;border-radius:3px"></div>
<svg class="a" style="left:1138px;top:242.5px" width="12" height="11" viewBox="0 0 12 11"><circle cx="6.5" cy="4.5" r="3" fill="none" stroke="#ddd" stroke-width="1"/><path d="M4.3 6.7 L1.5 9.5" stroke="#ddd" stroke-width="1.1"/></svg>
<div class="a" style="left:1261.7px;top:241.7px;width:11.6px;height:13.3px;background:#2b2b2b;border-radius:3px"></div>
<svg class="a" style="left:1264.5px;top:246.5px" width="6" height="4" viewBox="0 0 6 4"><path d="M0.5 0.5 L3 3 L5.5 0.5" stroke="#cfcfcf" fill="none" stroke-width="0.9"/></svg>
<div class="a" style="left:1069px;top:427.6px;width:17.5px;height:17px;background:#303030;border-radius:3px 0 0 3px"></div>
<svg class="a" style="left:1071px;top:264.7px" width="12" height="12" viewBox="0 0 12 12"><path d="M3 10 V5 M2 5 H4 M3 3 V5" stroke="#ddd" stroke-width="1.3"/><path d="M7 10 V5 L5.5 2 M7 5 L8.5 2" stroke="#ddd" stroke-width="1.2" fill="none"/><circle cx="3" cy="9.5" r="1.5" fill="#ddd"/></svg>
<svg class="a" style="left:1071px;top:288.3px" width="12" height="12" viewBox="0 0 12 12"><rect x="1.5" y="3" width="9" height="7" fill="none" stroke="#ddd" stroke-width="1"/><path d="M1.5 3 L3 1 H10.5 V3" stroke="#ddd" fill="none" stroke-width="0.8"/><rect x="4" y="5" width="4" height="3" fill="#ddd"/></svg>
<svg class="a" style="left:1071px;top:307.3px" width="12" height="12" viewBox="0 0 12 12"><rect x="1.5" y="1.5" width="9" height="3" fill="#ddd"/><path d="M2.5 5 H9.5 V7.5 H2.5Z" fill="none" stroke="#ddd" stroke-width="0.9"/><path d="M3.5 7.5 V10.5 H8.5 V7.5" fill="none" stroke="#ddd" stroke-width="0.9"/></svg>
<svg class="a" style="left:1071px;top:326.3px" width="12" height="12" viewBox="0 0 12 12"><rect x="1.5" y="3.5" width="7" height="7" fill="#888"/><rect x="3.5" y="1.5" width="7" height="7" fill="#ddd"/><path d="M4.5 7.5 L6.5 4 L8.5 7.5Z" fill="#333"/></svg>
<svg class="a" style="left:1071px;top:345.7px" width="12" height="12" viewBox="0 0 12 12"><path d="M1.5 10 L4 3 L6.5 10Z" fill="#ddd"/><circle cx="8" cy="8" r="2.2" fill="none" stroke="#ddd" stroke-width="1"/><circle cx="7.5" cy="2.5" r="1.4" fill="#ddd"/></svg>
<svg class="a" style="left:1071px;top:364.0px" width="12" height="12" viewBox="0 0 12 12"><circle cx="6" cy="6" r="4.5" fill="#c8505a"/><path d="M2 5 Q4 3 6 5 Q5 8 7 10 M7 1.5 Q8 4 10.5 4.5" stroke="#232323" stroke-width="0.9" fill="none"/></svg>
<svg class="a" style="left:1071px;top:388.3px" width="12" height="12" viewBox="0 0 12 12"><rect x="1.5" y="1.5" width="9" height="2.5" fill="#ddd"/><path d="M2.3 4.8 H9.7 V10.5 H2.3Z" fill="none" stroke="#ddd" stroke-width="1"/><rect x="4.5" y="6" width="3" height="1" fill="#ddd"/></svg>
<svg class="a" style="left:1071px;top:411.8px" width="12" height="12" viewBox="0 0 12 12"><rect x="2.5" y="2.5" width="7" height="7" fill="#e8913a"/><path d="M1 3 V1 H3 M9 1 H11 V3 M11 9 V11 H9 M3 11 H1 V9" stroke="#e8913a" fill="none" stroke-width="0.9"/></svg>
<svg class="a" style="left:1071px;top:430.4px" width="12" height="12" viewBox="0 0 12 12"><path d="M1.5 10.5 L6 6 M6.5 3 A2.5 2.5 0 1 0 9 5.5" fill="none" stroke="#6a9ae8" stroke-width="1.7" stroke-linecap="round"/></svg>
<svg class="a" style="left:1071px;top:449.0px" width="12" height="12" viewBox="0 0 12 12"><path d="M2.5 2.5 L6 6 L10 3 M6 6 L9.5 10" stroke="#6a9ae8" stroke-width="1" fill="none"/><circle cx="2.5" cy="2.5" r="1.3" fill="#6a9ae8"/><circle cx="10" cy="3" r="1.1" fill="#6a9ae8"/><circle cx="9.5" cy="10" r="1.1" fill="#6a9ae8"/><circle cx="2.5" cy="9.5" r="1.1" fill="#6a9ae8"/></svg>
<svg class="a" style="left:1071px;top:467.8px" width="12" height="12" viewBox="0 0 12 12"><circle cx="6" cy="6" r="4.3" fill="none" stroke="#6a9ae8" stroke-width="1.1"/><circle cx="6" cy="6" r="2" fill="#ddd"/><path d="M9 1.5 L10.5 3" stroke="#6a9ae8" stroke-width="1"/></svg>
<svg class="a" style="left:1071px;top:486.4px" width="12" height="12" viewBox="0 0 12 12"><ellipse cx="4.5" cy="7.5" rx="3" ry="2.2" transform="rotate(-45 4.5 7.5)" fill="none" stroke="#6a9ae8" stroke-width="1.2"/><ellipse cx="7.5" cy="4.5" rx="3" ry="2.2" transform="rotate(-45 7.5 4.5)" fill="none" stroke="#6a9ae8" stroke-width="1.2"/><circle cx="6" cy="6" r="1.2" fill="#ddd"/></svg>
<svg class="a" style="left:1071px;top:505.0px" width="12" height="12" viewBox="0 0 12 12"><path d="M2 2 H10 L6 10Z" fill="none" stroke="#1fb38a" stroke-width="1.1"/><circle cx="2" cy="2" r="1.4" fill="#1fb38a"/><circle cx="10" cy="2" r="1.4" fill="#1fb38a"/><circle cx="6" cy="10" r="1.4" fill="#1fb38a"/></svg>
<svg class="a" style="left:1071px;top:523.8px" width="12" height="12" viewBox="0 0 12 12"><circle cx="6" cy="6" r="4.5" fill="#c8505a"/><path d="M6 6 L6 1.5 A4.5 4.5 0 0 1 10.5 6Z" fill="#ddd"/><path d="M6 6 L1.5 6 A4.5 4.5 0 0 0 6 10.5Z" fill="#333"/></svg>
<svg class="a" style="left:1093px;top:263.5px" width="11" height="11" viewBox="0 0 11 11"><rect x="2.5" y="2.5" width="6" height="6" fill="#ddd"/><path d="M1 3 V1 H3 M8 1 H10 V3 M10 8 V10 H8 M3 10 H1 V8" stroke="#ddd" fill="none" stroke-width="0.9"/></svg>
<div class="t" style="left:1109.3px;top:265.4px;font-size:8px;color:#d6d6d6;">Rim</div>
<svg class="a" style="left:1133px;top:265.5px" width="6" height="8" viewBox="0 0 6 8"><path d="M1 1 L4.5 4 L1 7" stroke="#ccc" fill="none" stroke-width="0.9"/></svg>
<svg class="a" style="left:1142.5px;top:263.5px" width="11" height="11" viewBox="0 0 11 11"><rect x="0.8" y="0.8" width="9.4" height="9.4" fill="#3a3a3a" stroke="#555" stroke-width="0.6"/><circle cx="5.5" cy="5.5" r="3.3" fill="none" stroke="#ddd" stroke-width="1.1"/></svg>
<div class="t" style="left:1159.3px;top:265.4px;font-size:8px;color:#d6d6d6;">Subdivision</div>
<svg class="a" style="left:1262.5px;top:263.5px" width="11" height="11" viewBox="0 0 11 11"><path d="M1.5 9.5 L4.5 6.5 M3.5 4.5 L6.5 7.5 M4.5 3.5 L7.5 6.5 L9 3.5 L7.5 2 Z" stroke="#9a9a9a" fill="none" stroke-width="0.9"/></svg>
<div class="a" style="left:1092.3px;top:286.7px;width:181.7px;height:11.6px;background:#545454;border-radius:3px"></div>
<svg class="a" style="left:1096.5px;top:288.5px" width="8" height="8" viewBox="0 0 8 8"><path d="M4 0.5 V7.5 M0.5 4 H7.5" stroke="#ddd" stroke-width="0.9"/></svg>
<div class="t" style="left:1166.5px;top:288.9px;font-size:8px;color:#e0e0e0;">Add Modifier</div>
<div class="a" style="left:1092.3px;top:306px;width:182px;height:103.3px;background:#3d3d3d;border:1px solid #4f7cc0;border-radius:4px"></div>
<svg class="a" style="left:1097px;top:311px" width="7" height="6" viewBox="0 0 7 6"><path d="M1 1 L3.5 4 L6 1" stroke="#ccc" fill="none" stroke-width="0.9"/></svg>
<svg class="a" style="left:1106.5px;top:309.5px" width="11" height="11" viewBox="0 0 11 11"><rect x="0.8" y="0.8" width="9.4" height="9.4" rx="1" fill="#484848" stroke="#5a5a5a" stroke-width="0.6"/><circle cx="5.5" cy="5.5" r="3.3" fill="none" stroke="#ddd" stroke-width="1.1"/></svg>
<div class="a" style="left:1125px;top:308.3px;width:48.3px;height:13px;background:#1d1d1d;border-radius:3px"></div>
<div class="t" style="left:1129.3px;top:311.2px;font-size:8px;color:#e0e0e0;">Subdivision</div>
<div class="a" style="left:1174.5px;top:308.3px;width:26px;height:13px;background:#545454;border-radius:3px 0 0 3px"></div>
<div class="a" style="left:1201.3px;top:308.3px;width:26px;height:13px;background:#4772b3;border-radius:0 3px 3px 0"></div>
<div class="a" style="left:1227.5px;top:308.3px;width:13px;height:13px;background:#2a2a2a;border-radius:0 3px 3px 0"></div>
<svg class="a" style="left:1175px;top:309px" width="66" height="12" viewBox="0 0 66 12"><path d="M2 2.5 H10 L6 10Z" fill="none" stroke="#ddd" stroke-width="0.8"/><circle cx="2" cy="2.5" r="1.1" fill="#ddd"/><circle cx="10" cy="2.5" r="1.1" fill="#ddd"/><circle cx="6" cy="10" r="1.1" fill="#ddd"/><rect x="15" y="3" width="7" height="6.5" fill="none" stroke="#ccc" stroke-width="0.6" stroke-dasharray="1 1"/><rect x="20.5" y="1.5" width="3" height="3" fill="#eee"/><circle cx="15" cy="9.5" r="1" fill="#545454" stroke="#ccc" stroke-width="0.6"/><rect x="28.5" y="2.5" width="9" height="6" fill="#fff"/><path d="M30.5 10 H35.5" stroke="#fff" stroke-width="1"/><path d="M41 4 H43 L44 2.5 H47 L48 4 H50 V9.5 H41Z" fill="#fff"/><circle cx="45.5" cy="6.7" r="1.7" fill="#4772b3"/><path d="M54 4.5 L56.5 7 L59 4.5" stroke="#ccc" fill="none" stroke-width="0.9"/></svg>
<svg class="a" style="left:1243.5px;top:311px" width="8" height="8" viewBox="0 0 8 8"><path d="M1 1 L7 7 M7 1 L1 7" stroke="#ddd" stroke-width="1"/></svg>
<svg class="a" style="left:1261.5px;top:312px" width="9" height="5" viewBox="0 0 9 5"><path d="M0 1 H9 M0 3.5 H9" stroke="#555" stroke-width="0.7" stroke-dasharray="1 0.8"/></svg>
<div class="a" style="left:1097.7px;top:329px;width:171.3px;height:11.7px;background:#545454;border-radius:3px;overflow:hidden"><div class="a" style="left:0;top:0;width:85px;height:11.7px;background:#4772b3"></div></div>
<div class="t" style="left:1097.7px;top:331.3px;width:85px;text-align:center;font-size:8px;color:#fff">Catmull-Clark</div>
<div class="t" style="left:1182.7px;top:331.3px;width:86.3px;text-align:center;font-size:8px;color:#e0e0e0">Simple</div>
<div class="t" style="left:1060px;top:347.8px;width:97.3px;text-align:right;font-size:8px;color:#d0d0d0">Levels Viewport</div>
<div class="t" style="left:1060px;top:361.4px;width:97.3px;text-align:right;font-size:8px;color:#d0d0d0">Render</div>
<div class="a" style="left:1164.3px;top:345.7px;width:90.7px;height:12px;background:#545454;border-radius:3px 3px 0 0"></div>
<div class="a" style="left:1164.3px;top:358.9px;width:90.7px;height:12px;background:#545454;border-radius:0 0 3px 3px"></div>
<div class="t" style="left:1164.3px;top:347.8px;width:90.7px;text-align:center;font-size:8px;color:#e0e0e0">2</div>
<div class="t" style="left:1164.3px;top:361.4px;width:90.7px;text-align:center;font-size:8px;color:#e0e0e0">2</div>
<div class="a" style="left:1261.3px;top:350.4px;width:2.6px;height:2.6px;border-radius:50%;background:#ddd"></div>
<div class="a" style="left:1261.3px;top:363.9px;width:2.6px;height:2.6px;border-radius:50%;background:#ddd"></div>
<div class="a" style="left:1261.3px;top:380.1px;width:2.6px;height:2.6px;border-radius:50%;background:#ddd"></div>
<svg class="a" style="left:1164.5px;top:376.8px" width="9" height="9" viewBox="0 0 9 9"><rect x="0.3" y="0.3" width="8" height="8" rx="1.5" fill="#4772b3"/><path d="M1.8 4.3 L3.5 6 L6.8 2.3" stroke="#fff" fill="none" stroke-width="1.2"/></svg>
<div class="t" style="left:1175.0px;top:377.6px;font-size:8px;color:#e0e0e0;">Optimal Display</div>
<svg class="a" style="left:1108px;top:398px" width="6" height="8" viewBox="0 0 6 8"><path d="M1 1 L4.5 4 L1 7" stroke="#ccc" fill="none" stroke-width="0.9"/></svg>
<div class="t" style="left:1116.0px;top:398.1px;font-size:8px;color:#e0e0e0;">Advanced</div>
<div class="a" style="left:0;top:706px;width:1280px;height:14px;background:#181818"></div>
<svg class="a" style="left:8.0px;top:708px" width="8" height="11" viewBox="0 0 8 11"><rect x="1" y="0.8" width="5.6" height="9.4" rx="2.8" fill="none" stroke="#ccc" stroke-width="0.9"/><path d="M1 5 V3.5 A2.8 2.8 0 0 1 3.8 0.8 V5Z" fill="#ccc"/></svg>
<div class="t" style="left:23.0px;top:709.7px;font-size:8px;color:#bdbdbd">Select</div>
<svg class="a" style="left:149.0px;top:708px" width="8" height="11" viewBox="0 0 8 11"><rect x="1" y="0.8" width="5.6" height="9.4" rx="2.8" fill="none" stroke="#ccc" stroke-width="0.9"/><rect x="3.3" y="2" width="1.2" height="3" fill="#ccc"/></svg>
<div class="t" style="left:163.7px;top:709.7px;font-size:8px;color:#bdbdbd">Rotate View</div>
<svg class="a" style="left:289.0px;top:708px" width="8" height="11" viewBox="0 0 8 11"><rect x="1" y="0.8" width="5.6" height="9.4" rx="2.8" fill="none" stroke="#ccc" stroke-width="0.9"/><path d="M6.6 5 V3.5 A2.8 2.8 0 0 0 3.8 0.8 V5Z" fill="#ccc"/></svg>
<div class="t" style="left:303.7px;top:709.7px;font-size:8px;color:#bdbdbd">Call Menu</div>
<div class="t" style="left:841.7px;top:709.7px;font-size:7.4px;color:#bdbdbd">Rim</div>
<div class="t" style="left:860.5px;top:709.7px;font-size:8px;color:#bdbdbd">Verts:0/646</div>
<div class="t" style="left:909.0px;top:709.7px;font-size:8px;color:#bdbdbd">Edges:0/1,234</div>
<div class="t" style="left:967.5px;top:709.7px;font-size:8px;color:#bdbdbd">Faces:0/586</div>
<div class="t" style="left:1018.5px;top:709.7px;font-size:8px;color:#bdbdbd">Tris:1,179</div>
<div class="t" style="left:1061.0px;top:709.7px;font-size:8px;color:#bdbdbd">Objects:1/2</div>
<div class="t" style="left:1108.0px;top:709.7px;font-size:8px;color:#bdbdbd">Memory: 144.8 MiB</div>
<div class="t" style="left:1183.5px;top:709.7px;font-size:8px;color:#bdbdbd">VRAM: 1.6/8.0 GiB</div>
<div class="t" style="left:1258.5px;top:709.7px;font-size:8px;color:#bdbdbd">4.0.2</div>
<div class="a" style="left:857.3px;top:708.5px;width:0.8px;height:9px;background:#8a8a8a"></div>
<div class="a" style="left:905.5px;top:708.5px;width:0.8px;height:9px;background:#8a8a8a"></div>
<div class="a" style="left:964.3px;top:708.5px;width:0.8px;height:9px;background:#8a8a8a"></div>
<div class="a" style="left:1014.6px;top:708.5px;width:0.8px;height:9px;background:#8a8a8a"></div>
<div class="a" style="left:1057.5px;top:708.5px;width:0.8px;height:9px;background:#8a8a8a"></div>
<div class="a" style="left:1104.5px;top:708.5px;width:0.8px;height:9px;background:#8a8a8a"></div>
<div class="a" style="left:1179.5px;top:708.5px;width:0.8px;height:9px;background:#8a8a8a"></div>
<div class="a" style="left:1254.0px;top:708.5px;width:0.8px;height:9px;background:#8a8a8a"></div>
</body></html>
